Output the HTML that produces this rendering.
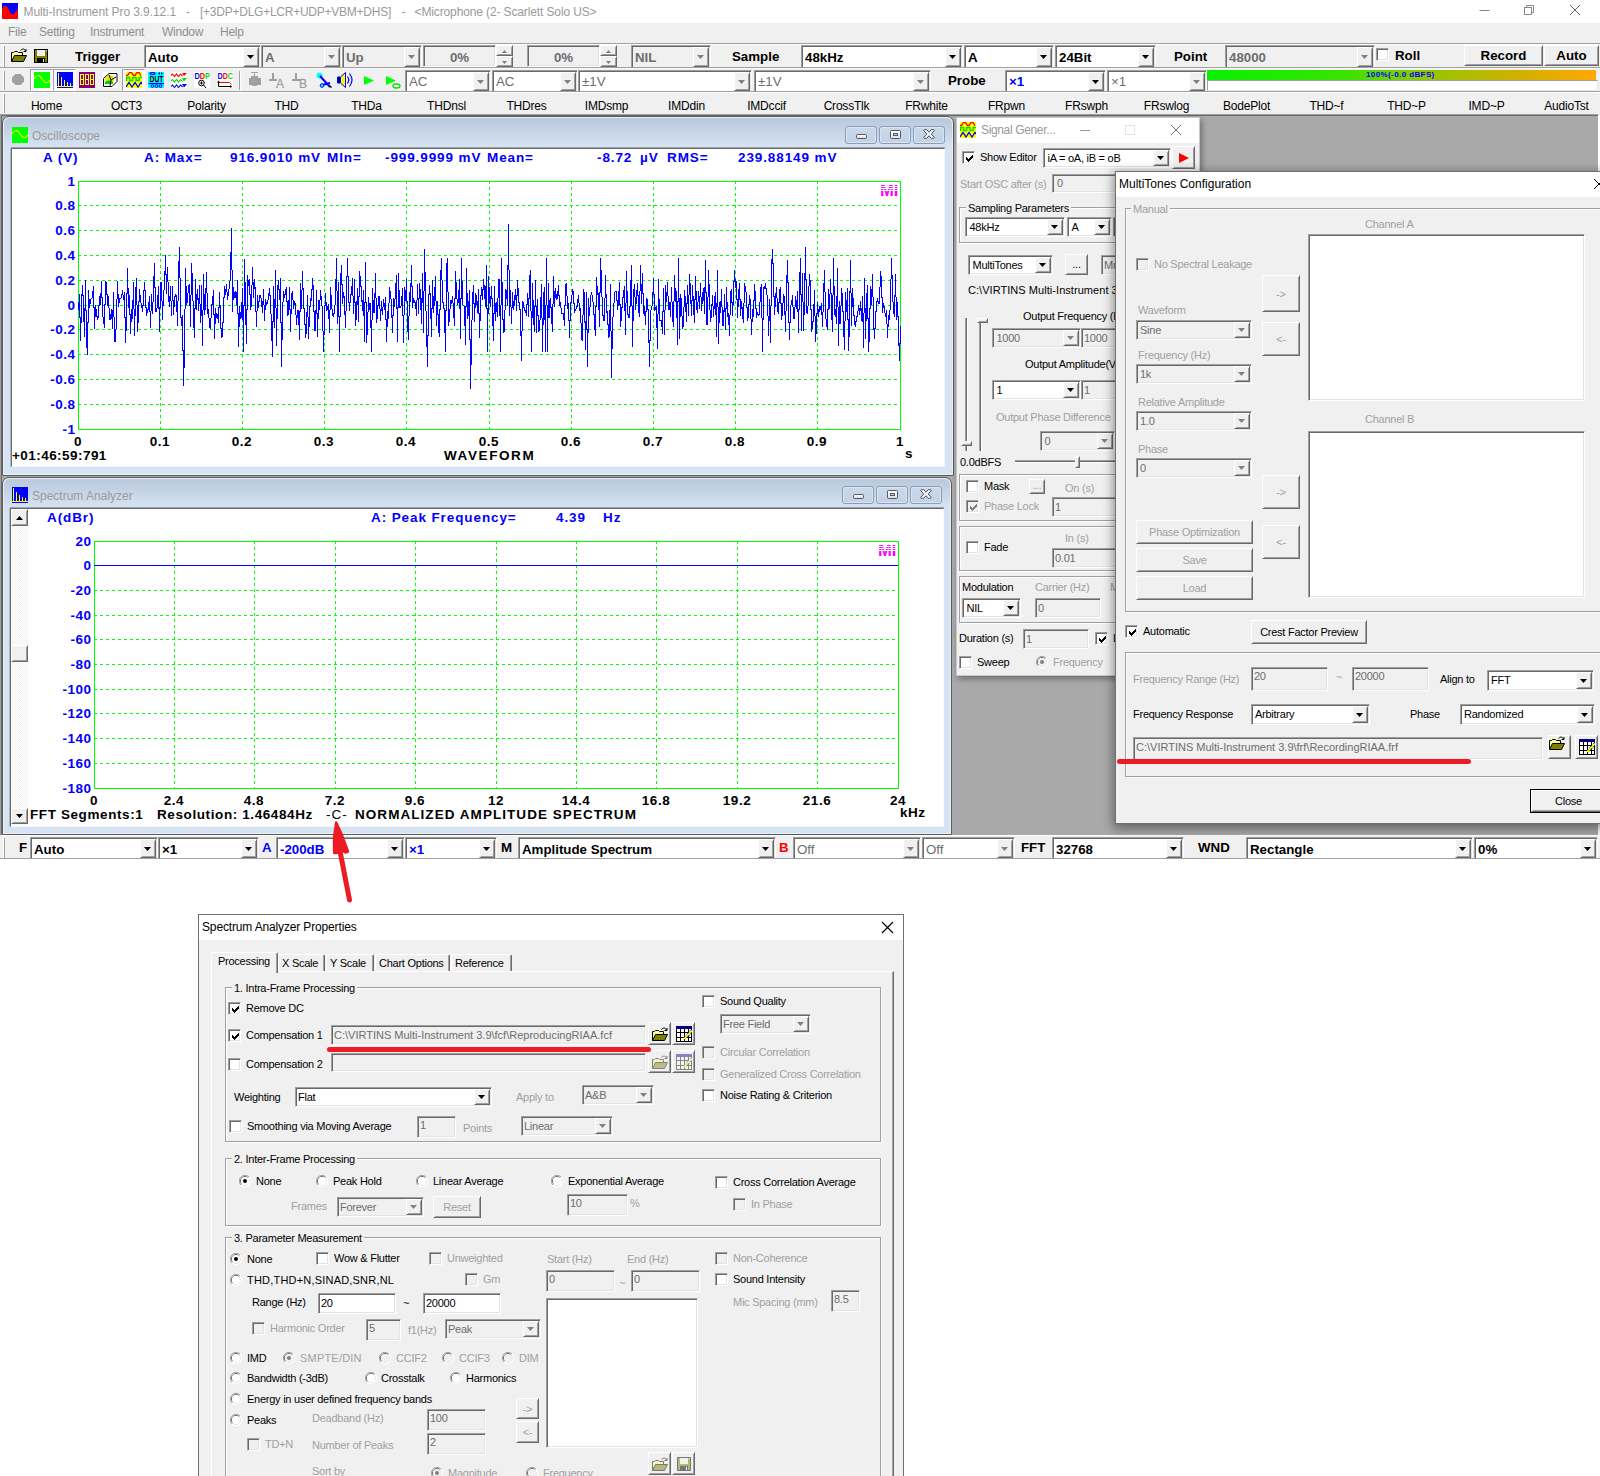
<!DOCTYPE html>
<html><head><meta charset="utf-8"><title>Multi-Instrument Pro</title>
<style>
*{box-sizing:border-box;margin:0;padding:0}
html,body{width:1600px;height:1476px;overflow:hidden;background:#fff}
body{font-family:"Liberation Sans",sans-serif;font-size:11px;color:#000;position:relative}
div,span,svg.abs,svg.rd{position:absolute}
span{white-space:pre;line-height:14px}
.t{font-size:11px;letter-spacing:-.25px}
.w{letter-spacing:.2px}
.tb{font-size:13.3px;font-weight:bold;line-height:16px}
.ui{font-size:12px;line-height:15px}
.sk{border:1px solid;border-color:#a0a0a0 #fff #fff #a0a0a0;box-shadow:inset 1px 1px 0 #696969,inset -1px -1px 0 #e3e3e3}
.rs{background:#f0f0f0;border:1px solid;border-color:#fff #696969 #696969 #fff;box-shadow:inset 1px 1px 0 #f0f0f0,inset -1px -1px 0 #a0a0a0}
.rs .ar{position:absolute;left:50%;top:50%;margin-left:-4px;margin-top:-2px}
.gb{border:1px solid #a0a0a0;box-shadow:1px 1px 0 #fff,inset 1px 1px 0 #fff}

.cw{border:1px solid #5a5a5a;border-radius:7px 7px 1px 1px;background:#d6e3f2;box-shadow:inset 0 0 0 1px #e9f0f8}
.cwt{left:1px;right:1px;top:1px;height:28px;border-radius:6px 6px 0 0;background:linear-gradient(#b9c9dc 0%,#c3d2e4 40%,#d6e3f2 100%)}
.cwb{width:32px;height:18px;border:1px solid #8b9cba;border-radius:3px;background:linear-gradient(#cbd9ea,#c2d1e4);box-shadow:inset 0 0 0 1px #dbe6f3}
.cwb i{position:absolute;background:linear-gradient(#fff,#e0e0e0);border:1px solid #55586a}
.cwb b{position:absolute;background:#c6d4e6;border:1px solid #55586a}
.cwc{background:#fff;border:1px solid;border-color:#6a6a6a #f4f7fb #f4f7fb #6a6a6a;box-shadow:0 -1px 0 #9aa3ad,-1px 0 0 #b0bac6}

.cb{font-size:13.5px;font-weight:bold;line-height:16px}
</style></head>
<body>
<div class="" style="left:0px;top:0px;width:1600px;height:23px;background:#fff"></div>
<svg class="abs" style="left:2px;top:3px" width="16" height="16" viewBox="0 0 16 16"><rect width="16" height="16" fill="#0000ff"/><path d="M0 6 C2 1.5 4.5 1.5 6.5 6 S10.5 13.5 13 9.5 L16 6 V16 H0z" fill="#ff0000"/></svg>
<span class="ui" style="left:23.5px;top:5px;letter-spacing:-0.077px;color:#999">Multi-Instrument Pro 3.9.12.1</span>
<span class="ui" style="left:186px;top:5px;color:#999">-</span>
<span class="ui" style="left:200px;top:5px;letter-spacing:-0.247px;color:#999">[+3DP+DLG+LCR+UDP+VBM+DHS]</span>
<span class="ui" style="left:401.5px;top:5px;color:#999">-</span>
<span class="ui" style="left:414.5px;top:5px;letter-spacing:-0.124px;color:#999">&lt;Microphone (2- Scarlett Solo US&gt;</span>
<svg class="abs" style="left:1470px;top:0" width="130" height="23" viewBox="0 0 130 23"><g stroke="#888" fill="none" stroke-width="1"><path d="M9.5 10.5h10"/><rect x="54.500" y="7.500" width="7" height="7"/><path d="M56.500 7.500v-2h7v7h-2"/><path d="M100 5l10 10M110 5l-10 10" stroke="#666"/></g></svg>
<div class="" style="left:0px;top:23px;width:1600px;height:21px;background:#f0f0f0"></div>
<span class="ui" style="left:8px;top:25px;color:#8f8f8f;letter-spacing:-.25px">File</span>
<span class="ui" style="left:39px;top:25px;color:#8f8f8f;letter-spacing:-.25px">Setting</span>
<span class="ui" style="left:90px;top:25px;color:#8f8f8f;letter-spacing:-.25px">Instrument</span>
<span class="ui" style="left:162px;top:25px;color:#8f8f8f;letter-spacing:-.25px">Window</span>
<span class="ui" style="left:220px;top:25px;color:#8f8f8f;letter-spacing:-.25px">Help</span>
<div class="" style="left:0px;top:43px;width:1600px;height:73px;background:#f0f0f0"></div>
<div class="" style="left:0px;top:43px;width:1600px;height:1px;background:#a0a0a0"></div>
<div class="" style="left:0px;top:44px;width:1600px;height:1px;background:#fff"></div>
<div class="" style="left:0px;top:67px;width:1600px;height:1px;background:#a0a0a0"></div>
<div class="" style="left:0px;top:68px;width:1600px;height:1px;background:#f8f8f8"></div>
<div class="" style="left:0px;top:91px;width:1600px;height:1px;background:#a0a0a0"></div>
<div class="" style="left:0px;top:92px;width:1600px;height:1px;background:#fff"></div>
<div class="" style="left:3px;top:46px;width:1px;height:21px;background:#fff"></div>
<div class="" style="left:4px;top:46px;width:1px;height:21px;background:#a0a0a0"></div>
<div class="" style="left:3px;top:71px;width:1px;height:19px;background:#fff"></div>
<div class="" style="left:4px;top:71px;width:1px;height:19px;background:#a0a0a0"></div>
<div class="" style="left:3px;top:94px;width:1px;height:19px;background:#fff"></div>
<div class="" style="left:4px;top:94px;width:1px;height:19px;background:#a0a0a0"></div>
<svg class="abs" style="left:11px;top:48px;opacity:1" width="16" height="15" viewBox="0 0 16 15"><path d="M0.500 13.500V4.500h2l1-1h3l1 1h4v3" fill="#ffff99" stroke="#000"/><path d="M0.500 13.500l3-6h12l-3 6z" fill="#808000" stroke="#000"/><path d="M9.500 2.500c2-2 4-2 5 0.500m0.500-2v2.500h-2.500" fill="none" stroke="#000"/></svg>
<svg class="abs" style="left:34px;top:49px;opacity:1" width="14" height="14" viewBox="0 0 14 14" shape-rendering="crispEdges"><rect x="0.500" y="0.500" width="13" height="13" fill="#808000" stroke="#000"/><rect x="3" y="1" width="8" height="6" fill="#f0f0f0"/><rect x="3" y="9" width="8" height="4" fill="#000"/><rect x="9" y="10" width="1" height="3" fill="#f0f0f0"/><rect x="12" y="1" width="1" height="1" fill="#f0f0f0"/></svg>
<span class="tb" style="left:75px;top:49px;">Trigger</span>
<div class="sk" style="left:144px;top:45px;width:117px;height:24px;background:#fff;"></div>
<div class="rs" style="left:243px;top:47px;width:16px;height:20px;"><svg class="ar" width="7" height="4" viewBox="0 0 7 4"><path d="M0 0h7L3.5 4z" fill="#000"/></svg></div>
<span class="tb" style="left:148px;top:50px;color:#000;">Auto</span>
<div class="sk" style="left:261px;top:45px;width:81px;height:24px;background:#f0f0f0;"></div>
<div class="rs" style="left:324px;top:47px;width:16px;height:20px;"><svg class="ar" width="7" height="4" viewBox="0 0 7 4"><path d="M0 0h7L3.5 4z" fill="#808080"/></svg></div>
<span class="tb" style="left:265px;top:50px;color:#6d6d6d;">A</span>
<div class="sk" style="left:342px;top:45px;width:80px;height:24px;background:#f0f0f0;"></div>
<div class="rs" style="left:404px;top:47px;width:16px;height:20px;"><svg class="ar" width="7" height="4" viewBox="0 0 7 4"><path d="M0 0h7L3.5 4z" fill="#808080"/></svg></div>
<span class="tb" style="left:346px;top:50px;color:#6d6d6d;">Up</span>
<div class="sk" style="left:423px;top:45px;width:73px;height:22px;background:#f0f0f0;"></div>
<span class="tb" style="left:423px;top:50px;width:73px;text-align:center;color:#6d6d6d">0%</span>
<div class="rs" style="left:496px;top:45px;width:17px;height:11px;"><svg class="ar" width="5" height="3" viewBox="0 0 5 3" style="margin-left:-3px;margin-top:-1px"><path d="M0 3h5L2.500 0z" fill="#808080"/></svg></div>
<div class="rs" style="left:496px;top:56px;width:17px;height:11px;"><svg class="ar" width="5" height="3" viewBox="0 0 5 3" style="margin-left:-3px;margin-top:-1px"><path d="M0 0h5L2.500 3z" fill="#808080"/></svg></div>
<div class="sk" style="left:527px;top:45px;width:73px;height:22px;background:#f0f0f0;"></div>
<span class="tb" style="left:527px;top:50px;width:73px;text-align:center;color:#6d6d6d">0%</span>
<div class="rs" style="left:600px;top:45px;width:17px;height:11px;"><svg class="ar" width="5" height="3" viewBox="0 0 5 3" style="margin-left:-3px;margin-top:-1px"><path d="M0 3h5L2.500 0z" fill="#808080"/></svg></div>
<div class="rs" style="left:600px;top:56px;width:17px;height:11px;"><svg class="ar" width="5" height="3" viewBox="0 0 5 3" style="margin-left:-3px;margin-top:-1px"><path d="M0 0h5L2.500 3z" fill="#808080"/></svg></div>
<div class="sk" style="left:631px;top:45px;width:80px;height:24px;background:#f0f0f0;"></div>
<div class="rs" style="left:693px;top:47px;width:16px;height:20px;"><svg class="ar" width="7" height="4" viewBox="0 0 7 4"><path d="M0 0h7L3.5 4z" fill="#808080"/></svg></div>
<span class="tb" style="left:635px;top:50px;color:#6d6d6d;">NIL</span>
<span class="tb" style="left:732px;top:49px;">Sample</span>
<div class="sk" style="left:801px;top:45px;width:162px;height:24px;background:#fff;"></div>
<div class="rs" style="left:945px;top:47px;width:16px;height:20px;"><svg class="ar" width="7" height="4" viewBox="0 0 7 4"><path d="M0 0h7L3.5 4z" fill="#000"/></svg></div>
<span class="tb" style="left:805px;top:50px;color:#000;">48kHz</span>
<div class="sk" style="left:964px;top:45px;width:90px;height:24px;background:#fff;"></div>
<div class="rs" style="left:1036px;top:47px;width:16px;height:20px;"><svg class="ar" width="7" height="4" viewBox="0 0 7 4"><path d="M0 0h7L3.5 4z" fill="#000"/></svg></div>
<span class="tb" style="left:968px;top:50px;color:#000;">A</span>
<div class="sk" style="left:1055px;top:45px;width:101px;height:24px;background:#fff;"></div>
<div class="rs" style="left:1138px;top:47px;width:16px;height:20px;"><svg class="ar" width="7" height="4" viewBox="0 0 7 4"><path d="M0 0h7L3.5 4z" fill="#000"/></svg></div>
<span class="tb" style="left:1059px;top:50px;color:#000;">24Bit</span>
<span class="tb" style="left:1174px;top:49px;">Point</span>
<div class="sk" style="left:1225px;top:45px;width:150px;height:24px;background:#f0f0f0;"></div>
<div class="rs" style="left:1357px;top:47px;width:16px;height:20px;"><svg class="ar" width="7" height="4" viewBox="0 0 7 4"><path d="M0 0h7L3.5 4z" fill="#808080"/></svg></div>
<span class="tb" style="left:1229px;top:50px;color:#6d6d6d;">48000</span>
<div class="sk" style="left:1376px;top:48px;width:13px;height:13px;background:#fff;"></div>
<span class="tb" style="left:1395px;top:48px;">Roll</span>
<div class="rs" style="left:1464px;top:45px;width:79px;height:21px;"><span class="tb" style="position:absolute;left:0;right:0;text-align:center;top:2px;color:#000;">Record</span></div>
<div class="rs" style="left:1544px;top:45px;width:55px;height:21px;"><span class="tb" style="position:absolute;left:0;right:0;text-align:center;top:2px;color:#000;">Auto</span></div>
<div class="sk" style="left:405px;top:70px;width:86px;height:23px;background:#fff;"></div>
<div class="rs" style="left:473px;top:72px;width:16px;height:19px;"><svg class="ar" width="7" height="4" viewBox="0 0 7 4"><path d="M0 0h7L3.5 4z" fill="#808080"/></svg></div>
<span class="tb" style="left:409px;top:74px;color:#6d6d6d;font-weight:normal">AC</span>
<div class="sk" style="left:492px;top:70px;width:86px;height:23px;background:#fff;"></div>
<div class="rs" style="left:560px;top:72px;width:16px;height:19px;"><svg class="ar" width="7" height="4" viewBox="0 0 7 4"><path d="M0 0h7L3.5 4z" fill="#808080"/></svg></div>
<span class="tb" style="left:496px;top:74px;color:#6d6d6d;font-weight:normal">AC</span>
<div class="sk" style="left:578px;top:70px;width:174px;height:23px;background:#fff;"></div>
<div class="rs" style="left:734px;top:72px;width:16px;height:19px;"><svg class="ar" width="7" height="4" viewBox="0 0 7 4"><path d="M0 0h7L3.5 4z" fill="#808080"/></svg></div>
<span class="tb" style="left:582px;top:74px;color:#6d6d6d;font-weight:normal">±1V</span>
<div class="sk" style="left:754px;top:70px;width:177px;height:23px;background:#fff;"></div>
<div class="rs" style="left:913px;top:72px;width:16px;height:19px;"><svg class="ar" width="7" height="4" viewBox="0 0 7 4"><path d="M0 0h7L3.5 4z" fill="#808080"/></svg></div>
<span class="tb" style="left:758px;top:74px;color:#6d6d6d;font-weight:normal">±1V</span>
<span class="tb" style="left:948px;top:73px;">Probe</span>
<div class="sk" style="left:1005px;top:70px;width:101px;height:23px;background:#fff;"></div>
<div class="rs" style="left:1088px;top:72px;width:16px;height:19px;"><svg class="ar" width="7" height="4" viewBox="0 0 7 4"><path d="M0 0h7L3.5 4z" fill="#000"/></svg></div>
<span class="tb" style="left:1009px;top:74px;color:#0000ff;">×1</span>
<div class="sk" style="left:1107px;top:70px;width:100px;height:23px;background:#fff;"></div>
<div class="rs" style="left:1189px;top:72px;width:16px;height:19px;"><svg class="ar" width="7" height="4" viewBox="0 0 7 4"><path d="M0 0h7L3.5 4z" fill="#808080"/></svg></div>
<span class="tb" style="left:1111px;top:74px;color:#6d6d6d;font-weight:normal">×1</span>
<div class="" style="left:1207px;top:70px;width:389px;height:10px;background:linear-gradient(90deg,#08f000 0%,#38e400 35%,#90c800 55%,#d0b000 80%,#ffa800 100%)"></div>
<span class="t" style="left:1366px;top:68px;font-size:8px;font-weight:bold;color:#0000ff;letter-spacing:.4px">100%(-0.0 dBFS)</span>
<div class="" style="left:1207px;top:80px;width:391px;height:11px;background:#fff;border:1px solid;border-color:#a0a0a0 #e8e8e8 #e8e8e8 #a0a0a0"></div>
<span class="ui" style="left:6.5px;top:99px;width:80px;text-align:center;letter-spacing:-.2px">Home</span>
<span class="ui" style="left:86.5px;top:99px;width:80px;text-align:center;letter-spacing:-.2px">OCT3</span>
<span class="ui" style="left:166.5px;top:99px;width:80px;text-align:center;letter-spacing:-.2px">Polarity</span>
<span class="ui" style="left:246.5px;top:99px;width:80px;text-align:center;letter-spacing:-.2px">THD</span>
<span class="ui" style="left:326.5px;top:99px;width:80px;text-align:center;letter-spacing:-.2px">THDa</span>
<span class="ui" style="left:406.5px;top:99px;width:80px;text-align:center;letter-spacing:-.2px">THDnsl</span>
<span class="ui" style="left:486.5px;top:99px;width:80px;text-align:center;letter-spacing:-.2px">THDres</span>
<span class="ui" style="left:566.5px;top:99px;width:80px;text-align:center;letter-spacing:-.2px">IMDsmp</span>
<span class="ui" style="left:646.5px;top:99px;width:80px;text-align:center;letter-spacing:-.2px">IMDdin</span>
<span class="ui" style="left:726.5px;top:99px;width:80px;text-align:center;letter-spacing:-.2px">IMDccif</span>
<span class="ui" style="left:806.5px;top:99px;width:80px;text-align:center;letter-spacing:-.2px">CrossTlk</span>
<span class="ui" style="left:886.5px;top:99px;width:80px;text-align:center;letter-spacing:-.2px">FRwhite</span>
<span class="ui" style="left:966.5px;top:99px;width:80px;text-align:center;letter-spacing:-.2px">FRpwn</span>
<span class="ui" style="left:1046.5px;top:99px;width:80px;text-align:center;letter-spacing:-.2px">FRswph</span>
<span class="ui" style="left:1126.5px;top:99px;width:80px;text-align:center;letter-spacing:-.2px">FRswlog</span>
<span class="ui" style="left:1206.5px;top:99px;width:80px;text-align:center;letter-spacing:-.2px">BodePlot</span>
<span class="ui" style="left:1286.5px;top:99px;width:80px;text-align:center;letter-spacing:-.2px">THD~f</span>
<span class="ui" style="left:1366.5px;top:99px;width:80px;text-align:center;letter-spacing:-.2px">THD~P</span>
<span class="ui" style="left:1446.5px;top:99px;width:80px;text-align:center;letter-spacing:-.2px">IMD~P</span>
<span class="ui" style="left:1526.5px;top:99px;width:80px;text-align:center;letter-spacing:-.2px">AudioTst</span>
<div class="" style="left:30px;top:69px;width:23px;height:22px;background:#f8f8f8;border:1px solid;border-color:#a0a0a0 #fff #fff #a0a0a0"></div>
<div class="" style="left:53px;top:69px;width:23px;height:22px;background:#f8f8f8;border:1px solid;border-color:#a0a0a0 #fff #fff #a0a0a0"></div>
<div class="" style="left:122px;top:69px;width:23px;height:22px;background:#f8f8f8;border:1px solid;border-color:#a0a0a0 #fff #fff #a0a0a0"></div>
<svg class="abs" style="left:12px;top:74px" width="12" height="11" viewBox="0 0 12 11"><path d="M3.500 0h5l3.500 3.500v4L8.500 11h-5L0 7.500v-4z" fill="#a0a0a0"/></svg>
<svg class="abs" style="left:34px;top:72px" width="16" height="16" viewBox="0 0 16 16" shape-rendering="crispEdges"><rect width="16" height="16" fill="#00ff00"/><path d="M0 7 Q4 0 8 7 T16 8" fill="none" stroke="#ffff00" stroke-width="1.200" shape-rendering="auto"/></svg>
<svg class="abs" style="left:57px;top:72px" width="16" height="16" viewBox="0 0 16 16" shape-rendering="crispEdges"><rect width="16" height="16" fill="#0000ff"/><path d="M1.500 1v13M4.500 5v9M7.500 8v6M10.500 10v4M13.500 11v3M0 14.500h16" stroke="#ffff00" fill="none"/></svg>
<svg class="abs" style="left:79px;top:72px" width="16" height="16" viewBox="0 0 16 16" shape-rendering="crispEdges"><rect width="16" height="16" fill="#800080"/><g stroke="#ffff00" fill="none"><rect x="1.500" y="2.500" width="3" height="5"/><rect x="1.500" y="7.500" width="3" height="5"/><rect x="6.500" y="2.500" width="3" height="5"/><rect x="6.500" y="7.500" width="3" height="5"/><rect x="11.500" y="2.500" width="3" height="5"/><rect x="11.500" y="7.500" width="3" height="5"/></g></svg>
<svg class="abs" style="left:102px;top:72px" width="16" height="16" viewBox="0 0 16 16" shape-rendering="crispEdges"><rect width="16" height="16" fill="#fff"/><path d="M1.500 6.500L7 1.500h8v8L10 14.500H1.500z" fill="#fff" stroke="#000" shape-rendering="auto"/><path d="M3 7c2-4 5-5 8-3 2 2 1 5-1 6H4z" fill="#e8e800" shape-rendering="auto"/><path d="M3 10c2-2 6-2 8 0v2H3z" fill="#00d000" shape-rendering="auto"/><path d="M7 3l2 5 5-3M9 8l-1 6" stroke="#000" fill="none" shape-rendering="auto"/></svg>
<svg class="abs" style="left:126px;top:72px" width="16" height="16" viewBox="0 0 16 16" shape-rendering="crispEdges"><rect width="16" height="16" fill="#ffff00"/><g fill="none" shape-rendering="auto" stroke-width="1.300"><path d="M0 3.500h1q1 0 1.500-1.500t1.500-1.500h1q1 0 1.500 1.500t1.500 1.500h0.500q1 0 1.500-1.500t1.500-1.500h1q1 0 1.500 1.500t1 1.500" stroke="#ff0000"/><path d="M0.600 9V5.600h3v3h3v-3h3.500v3h3v-3h3" stroke="#00e000" stroke-width="1.500"/><path d="M0 15l3-4.500 3 4.500 3-4.500 3 4.500 3-4.500 1 1.500" stroke="#0000ff"/></g></svg>
<svg class="abs" style="left:148px;top:72px" width="16" height="16" viewBox="0 0 16 16"><rect width="16" height="16" fill="#00ffff"/><g fill="none" stroke="#0000ff"><ellipse cx="4.500" cy="1.500" rx="2.500" ry="1" stroke-width="1.200"/><path d="M0.500 11.500h15.500" stroke-width="1.200"/><circle cx="4.500" cy="14" r="1.400"/><circle cx="8.500" cy="14" r="1.400"/><circle cx="12.500" cy="14" r="1.400"/></g><path d="M12 0v3l-2-1.500zM13 0v3l2-1.500z" fill="#0000ff"/><text x="8.500" y="10" font-family="Liberation Sans" font-weight="bold" font-size="9.500" text-anchor="middle" fill="#000" textLength="14" lengthAdjust="spacingAndGlyphs">DUT</text></svg>
<svg class="abs" style="left:171px;top:72px" width="16" height="16" viewBox="0 0 16 16"><rect width="16" height="16" fill="#fff"/><g fill="none" stroke-width="1.100"><path d="M0 3.500l1.500-1.500 2 2.500 2-2.500 2 2.500 2-2.500 2 2" stroke="#ff0000"/><path d="M0 9l1.500-1.500 2 2.500 2-2.500 2 2.500 2-2.500 2 2" stroke="#00e000"/><path d="M0 14.500l1.500-1.500 2 2.500 2-2.500 2 2.500 2-2.500 2 2" stroke="#0000ff"/></g><path d="M11 1h5l-3 3z" fill="#ff0000"/><path d="M11 6h5l-3 3.500z" fill="#00e000"/><path d="M11 12h5l-3 3.500z" fill="#0000ff"/></svg>
<svg class="abs" style="left:194px;top:72px" width="16" height="16" viewBox="0 0 16 16"><rect width="16" height="16" fill="#fff"/><text x="0.500" y="7" font-family="Liberation Sans" font-weight="bold" font-size="8.500" textLength="15.500" lengthAdjust="spacingAndGlyphs"><tspan fill="#0000ff">D</tspan><tspan fill="#ff0000">D</tspan><tspan fill="#00e000">P</tspan></text><circle cx="7.500" cy="11" r="2.800" fill="none" stroke="#000"/><path d="M9.500 13l2.500 3M6 11h3M7.500 9.500v3" stroke="#000" fill="none"/></svg>
<svg class="abs" style="left:217px;top:72px" width="16" height="16" viewBox="0 0 16 16"><rect width="16" height="16" fill="#fff"/><text x="0.500" y="7" font-family="Liberation Sans" font-weight="bold" font-size="8.500" textLength="15.500" lengthAdjust="spacingAndGlyphs"><tspan fill="#0000ff">D</tspan><tspan fill="#ff0000">D</tspan><tspan fill="#00e000">C</tspan></text><path d="M1.500 9v5.500h13" stroke="#000" fill="none"/><path d="M1.500 10.500h11l2 2" stroke="#ff0000" fill="none"/><path d="M0 10.500l1.500-2 1.500 2zM13 13l2 1.500-2 1.500z" fill="#000"/></svg>
<div class="" style="left:239px;top:71px;width:1px;height:19px;background:#a0a0a0"></div>
<div class="" style="left:240px;top:71px;width:1px;height:19px;background:#fff"></div>
<svg class="abs" style="left:248px;top:72px" width="13" height="16" viewBox="0 0 13 16" shape-rendering="crispEdges"><path d="M3 0.500h7M6.500 0v4M4 4h5l1 2h2v6h-2l-1 1H4l-1-1H1V6h2z" fill="#a0a0a0" stroke="#a0a0a0"/><path d="M2 14.500h3M8 14.500h3" stroke="#fff"/></svg>
<svg class="abs" style="left:269px;top:72px" width="16" height="16" viewBox="0 0 16 16"><path d="M0 8h8M4 1v7" stroke="#a0a0a0" stroke-width="2" fill="none"/><text x="7" y="15.500" font-family="Liberation Sans" font-size="12" fill="#a0a0a0" stroke="#a0a0a0" stroke-width=".300">A</text></svg>
<svg class="abs" style="left:292px;top:72px" width="16" height="16" viewBox="0 0 16 16"><path d="M0 8h8M4 1v7" stroke="#a0a0a0" stroke-width="2" fill="none"/><text x="7" y="15.500" font-family="Liberation Sans" font-size="12" fill="#a0a0a0" stroke="#a0a0a0" stroke-width=".300">B</text></svg>
<svg class="abs" style="left:316px;top:72px" width="16" height="16" viewBox="0 0 16 16"><circle cx="3.500" cy="3.500" r="3" fill="#00ffff"/><path d="M4 4l10 11M14 11L6 13" stroke="#0000ff" stroke-width="2" fill="none"/><circle cx="6" cy="13.500" r="1.800" fill="#00ffff" stroke="#0000ff"/><path d="M14 14l1.500 1.500" stroke="#000" stroke-width="1.500"/></svg>
<svg class="abs" style="left:337px;top:72px" width="17" height="16" viewBox="0 0 17 16"><path d="M0.500 5h3v6h-3z" fill="#000080" stroke="#0000ff"/><path d="M3.500 5l5-4.500v15l-5-4.500z" fill="#ffff00" stroke="#0000ff"/><path d="M10.500 4.500q2.500 3.500 0 7M12.500 1.500q5 6.500 0 13" stroke="#0000ff" fill="none" stroke-width="1.200"/></svg>
<svg class="abs" style="left:364px;top:74px" width="11" height="13" viewBox="0 0 11 13"><path d="M0 2l10 4.500L0 11z" fill="#00ff00"/></svg>
<svg class="abs" style="left:386px;top:74px" width="15" height="15" viewBox="0 0 15 15"><path d="M0 2l10 4.500L0 11z" fill="#00ff00"/><ellipse cx="10.500" cy="12" rx="3.500" ry="2" fill="none" stroke="#00e000" stroke-width="1.300"/></svg>
<div class="" style="left:0px;top:114px;width:1599px;height:722px;background:#a9a9a9;border:1px solid #fff;border-top:1px solid #a0a0a0;border-left:1px solid #a0a0a0;box-shadow:inset 1px 1px 0 #696969"></div>
<div class="cw" style="left:2px;top:116px;width:952px;height:360px"><div class="cwt" style="height:29px"></div><div style="left:1px;top:1px;right:-1px;height:30px"><div style="left:0px;top:0;width:300px;height:30px"><svg style="position:absolute;left:8px;top:9px" width="16" height="16" viewBox="0 0 16 16"><rect width="16" height="16" fill="#00ff00"/><path d="M0 7 Q4 0 8 7 T16 8" fill="none" stroke="#ffff00" stroke-width="1.2"/></svg><span class="ui" style="left:28px;top:11px;color:#9a9a9a">Oscilloscope</span></div><div class="cwb" style="right:77px;top:8px"><i style="left:10px;top:7px;width:11px;height:5px;border-radius:1.500px"></i></div><div class="cwb" style="right:43px;top:8px"><i style="left:10px;top:3px;width:11px;height:9px;border-radius:1.500px"></i><b style="left:13px;top:6px;width:5px;height:3px"></b></div><div class="cwb" style="right:9px;top:8px"><svg width="12" height="10" viewBox="0 0 12 10" style="position:absolute;left:9px;top:2px"><path d="M1.200 0.700h2.600L6 3.200 8.200 0.700h2.600q0.800 0.300 0.400 1.100L8.300 5l2.900 3.200q0.400 0.800-0.400 1.100H8.200L6 6.800 3.800 9.300H1.200q-0.800-0.300-0.400-1.100L3.700 5 0.800 1.800q-0.400-0.800 0.400-1.100z" fill="#f0f0f0" stroke="#55586a" stroke-width="1" stroke-linejoin="round"/></svg></div></div><div class="cwc" style="left:8px;top:31px;width:934px;height:319px"></div></div>
<span class="cb" style="left:43px;top:150px;color:#0000ff;letter-spacing:.9px">A (V)</span>
<span class="cb" style="left:144px;top:150px;color:#0000ff;letter-spacing:.9px">A: Max=</span>
<span class="cb" style="left:230px;top:150px;color:#0000ff;letter-spacing:.9px">916.9010 mV</span>
<span class="cb" style="left:327px;top:150px;color:#0000ff;letter-spacing:.9px">MIn=</span>
<span class="cb" style="left:385px;top:150px;color:#0000ff;letter-spacing:.9px">-999.9999 mV</span>
<span class="cb" style="left:487px;top:150px;color:#0000ff;letter-spacing:.9px">Mean=</span>
<span class="cb" style="left:597px;top:150px;color:#0000ff;letter-spacing:.9px">-8.72</span>
<span class="cb" style="left:640px;top:150px;color:#0000ff;letter-spacing:.9px">µV</span>
<span class="cb" style="left:667px;top:150px;color:#0000ff;letter-spacing:.9px">RMS=</span>
<span class="cb" style="left:738px;top:150px;color:#0000ff;letter-spacing:.9px">239.88149 mV</span>
<svg class="abs" style="left:0;top:0" width="960" height="480" viewBox="0 0 960 480" shape-rendering="crispEdges"><path d="M160.5 181V429M242.5 181V429M324.5 181V429M406.5 181V429M489.5 181V429M571.5 181V429M653.5 181V429M735.5 181V429M817.5 181V429M78 205.5H900M78 230.5H900M78 255.5H900M78 280.5H900M78 305.5H900M78 329.5H900M78 354.5H900M78 379.5H900M78 404.5H900" stroke="#00ff00" stroke-dasharray="3 3" fill="none"/><rect x="78.5" y="181.5" width="822" height="248" fill="none" stroke="#00ff00"/><path d="M78.5 302V310M79.5 294V318M80.5 317V341M81.5 294V323M82.5 285V296M83.5 295V322M84.5 308V337M85.5 280V311M86.5 310V348M87.5 322V355M88.5 290V323M89.5 299V308M90.5 299V304M91.5 298V299M92.5 291V298M93.5 286V308M94.5 307V329M95.5 305V317M96.5 309V317M97.5 316V320M98.5 305V318M99.5 296V306M100.5 293V305M101.5 281V298M102.5 297V317M103.5 317V324M104.5 304V328M105.5 281V305M106.5 282V295M107.5 294V306M108.5 296V308M109.5 308V320M110.5 314V320M111.5 309V319M112.5 310V329M113.5 292V317M114.5 317V342M115.5 329V342M116.5 299V329M117.5 281V299M118.5 294V307M119.5 298V303M120.5 298V299M121.5 294V298M122.5 290V295M123.5 295V300M124.5 292V318M125.5 317V343M126.5 293V331M127.5 268V294M128.5 288V308M129.5 295V315M130.5 314V334M131.5 309V322M132.5 300V319M133.5 282V309M134.5 309V336M135.5 287V316M136.5 278V305M137.5 305V332M138.5 301V323M139.5 289V302M140.5 295V303M141.5 303V308M142.5 305V312M143.5 290V306M144.5 282V291M145.5 290V308M146.5 307V316M147.5 309V313M148.5 302V310M149.5 296V312M150.5 311V328M151.5 294V311M152.5 302V314M153.5 276V302M154.5 263V288M155.5 287V312M156.5 308V312M157.5 295V308M158.5 286V309M159.5 307V332M160.5 282V308M161.5 282V301M162.5 301V320M163.5 290V306M164.5 271V290M165.5 255V275M166.5 274V294M167.5 267V282M168.5 282V302M169.5 296V307M170.5 286V301M171.5 301V316M172.5 286V301M173.5 300V315M174.5 296V307M175.5 294V297M176.5 295V312M177.5 301V326M178.5 261V301M179.5 247V278M180.5 278V318M181.5 317V326M182.5 315V351M183.5 350V386M184.5 309V368M185.5 268V309M186.5 286V305M187.5 293V303M188.5 285V293M189.5 284V306M190.5 295V327M191.5 263V295M192.5 273V301M193.5 301V328M194.5 308V338M195.5 279V309M196.5 294V310M197.5 289V300M198.5 298V311M199.5 285V304M200.5 304V323M201.5 285V316M202.5 310V346M203.5 274V310M204.5 294V315M205.5 288V310M206.5 272V293M207.5 293V314M208.5 309V318M209.5 318V328M210.5 318V329M211.5 304V318M212.5 296V305M213.5 290V315M214.5 314V339M215.5 308V324M216.5 313V318M217.5 314V319M218.5 307V323M219.5 292V308M220.5 305V329M221.5 328V338M222.5 322V337M223.5 297V323M224.5 286V298M225.5 289V295M226.5 284V292M227.5 292V300M228.5 289V296M229.5 281V289M230.5 252V281M231.5 228V270M232.5 270V312M233.5 287V300M234.5 292V298M235.5 291V298M236.5 292V305M237.5 280V314M238.5 313V347M239.5 306V327M240.5 312V319M241.5 302V318M242.5 288V320M243.5 305V352M244.5 259V306M245.5 282V325M246.5 309V344M247.5 275V310M248.5 280V286M249.5 279V295M250.5 294V310M251.5 285V307M252.5 267V285M253.5 282V298M254.5 279V289M255.5 287V312M256.5 311V327M257.5 295V311M258.5 301V308M259.5 295V302M260.5 295V298M261.5 298V307M262.5 301V313M263.5 289V305M264.5 305V321M265.5 299V310M266.5 302V305M267.5 300V304M268.5 293V300M269.5 288V296M270.5 295V314M271.5 314V341M272.5 321V357M273.5 286V322M274.5 299V328M275.5 270V308M276.5 308V346M277.5 285V319M278.5 280V290M279.5 289V300M280.5 278V323M281.5 322V367M282.5 302V340M283.5 291V302M284.5 294V298M285.5 289V295M286.5 287V302M287.5 301V316M288.5 300V315M289.5 287V310M290.5 309V332M291.5 293V314M292.5 291V300M293.5 300V309M294.5 301V305M295.5 303V315M296.5 315V325M297.5 310V318M298.5 310V325M299.5 311V340M300.5 283V312M301.5 290V309M302.5 271V290M303.5 288V309M304.5 308V325M305.5 324V338M306.5 312V334M307.5 295V317M308.5 317V339M309.5 306V327M310.5 298V307M311.5 289V301M312.5 278V290M313.5 285V312M314.5 311V331M315.5 310V331M316.5 290V314M317.5 313V337M318.5 300V319M319.5 300V310M320.5 290V300M321.5 296V306M322.5 306V331M323.5 331V352M324.5 305V335M325.5 293V306M326.5 302V311M327.5 306V310M328.5 304V319M329.5 310V333M330.5 287V310M331.5 295V309M332.5 309V316M333.5 313V317M334.5 305V314M335.5 279V305M336.5 258V291M337.5 291V324M338.5 282V317M339.5 316V352M340.5 273V317M341.5 265V285M342.5 284V304M343.5 292V298M344.5 296V315M345.5 311V328M346.5 276V311M347.5 258V277M348.5 276V303M349.5 302V311M350.5 294V303M351.5 286V295M352.5 278V296M353.5 296V314M354.5 279V303M355.5 302V326M356.5 301V320M357.5 288V305M358.5 296V322M359.5 271V297M360.5 276V287M361.5 286V302M362.5 300V311M363.5 290V316M364.5 302V342M365.5 262V303M366.5 302V343M367.5 312V335M368.5 297V312M369.5 303V310M370.5 303V328M371.5 320V352M372.5 288V320M373.5 300V313M374.5 293V313M375.5 273V298M376.5 298V323M377.5 305V319M378.5 296V306M379.5 296V309M380.5 309V321M381.5 301V311M382.5 307V315M383.5 299V307M384.5 303V310M385.5 297V320M386.5 319V342M387.5 311V327M388.5 303V319M389.5 287V303M390.5 291V299M391.5 299V318M392.5 315V333M393.5 298V316M394.5 299V307M395.5 283V299M396.5 275V309M397.5 307V342M398.5 273V308M399.5 290V308M400.5 306V308M401.5 296V306M402.5 288V316M403.5 315V343M404.5 287V315M405.5 290V301M406.5 279V302M407.5 301V332M408.5 316V340M409.5 292V316M410.5 283V302M411.5 265V287M412.5 286V308M413.5 298V303M414.5 300V303M415.5 302V309M416.5 300V316M417.5 284V300M418.5 298V314M419.5 283V299M420.5 289V310M421.5 298V324M422.5 273V303M423.5 291V333M424.5 249V291M425.5 272V311M426.5 311V347M427.5 335V367M428.5 294V336M429.5 285V295M430.5 293V319M431.5 308V337M432.5 280V309M433.5 296V313M434.5 287V306M435.5 276V301M436.5 301V326M437.5 301V315M438.5 314V333M439.5 309V337M440.5 270V310M441.5 258V280M442.5 280V303M443.5 302V309M444.5 308V333M445.5 310V352M446.5 263V311M447.5 258V292M448.5 292V326M449.5 309V322M450.5 300V309M451.5 300V304M452.5 296V303M453.5 303V318M454.5 298V326M455.5 271V299M456.5 282V299M457.5 299V305M458.5 290V303M459.5 279V309M460.5 298V339M461.5 258V299M462.5 281V305M463.5 305V306M464.5 306V326M465.5 306V345M466.5 268V307M467.5 293V319M468.5 301V316M469.5 290V340M470.5 339V389M471.5 320V365M472.5 292V320M473.5 285V304M474.5 303V322M475.5 293V308M476.5 295V305M477.5 301V313M478.5 289V314M479.5 313V338M480.5 295V321M481.5 287V296M482.5 289V300M483.5 279V290M484.5 285V299M485.5 286V307M486.5 265V309M487.5 308V352M488.5 276V314M489.5 287V303M490.5 296V307M491.5 286V299M492.5 298V326M493.5 313V341M494.5 286V314M495.5 303V321M496.5 302V312M497.5 298V317M498.5 279V298M499.5 279V316M500.5 305V352M501.5 258V305M502.5 282V320M503.5 319V333M504.5 310V332M505.5 289V310M506.5 290V299M507.5 265V306M508.5 224V270M509.5 270V316M510.5 290V307M511.5 307V324M512.5 292V308M513.5 301V310M514.5 295V306M515.5 289V300M516.5 295V311M517.5 280V296M518.5 288V303M519.5 302V310M520.5 309V336M521.5 331V361M522.5 301V331M523.5 302V308M524.5 307V311M525.5 310V313M526.5 304V316M527.5 293V305M528.5 298V317M529.5 275V299M530.5 270V311M531.5 311V352M532.5 283V318M533.5 300V325M534.5 306V332M535.5 280V307M536.5 306V333M537.5 299V316M538.5 315V332M539.5 320V331M540.5 297V320M541.5 284V318M542.5 318V352M543.5 292V325M544.5 287V320M545.5 305V352M546.5 258V305M547.5 305V352M548.5 283V318M549.5 300V318M550.5 298V308M551.5 307V324M552.5 304V332M553.5 276V304M554.5 291V307M555.5 288V298M556.5 294V300M557.5 291V299M558.5 285V296M559.5 295V306M560.5 302V308M561.5 308V314M562.5 313V314M563.5 313V320M564.5 305V326M565.5 284V306M566.5 283V296M567.5 296V309M568.5 303V321M569.5 320V338M570.5 302V321M571.5 295V303M572.5 289V295M573.5 291V304M574.5 303V313M575.5 309V311M576.5 306V309M577.5 299V307M578.5 295V303M579.5 303V311M580.5 308V323M581.5 323V340M582.5 315V341M583.5 289V315M584.5 292V323M585.5 321V350M586.5 292V330M587.5 329V367M588.5 298V333M589.5 307V316M590.5 295V307M591.5 292V295M592.5 295V302M593.5 302V315M594.5 314V330M595.5 306V336M596.5 277V307M597.5 286V295M598.5 293V310M599.5 292V327M600.5 258V293M601.5 270V297M602.5 297V316M603.5 315V321M604.5 298V321M605.5 275V298M606.5 294V313M607.5 311V325M608.5 324V338M609.5 310V337M610.5 284V331M611.5 331V378M612.5 317V349M613.5 303V317M614.5 292V303M615.5 291V292M616.5 291V301M617.5 300V310M618.5 291V306M619.5 282V305M620.5 304V327M621.5 307V321M622.5 297V308M623.5 290V298M624.5 286V311M625.5 303V335M626.5 271V303M627.5 291V315M628.5 314V318M629.5 306V318M630.5 280V307M631.5 265V306M632.5 306V347M633.5 289V321M634.5 284V297M635.5 297V310M636.5 290V304M637.5 283V296M638.5 295V313M639.5 291V317M640.5 265V291M641.5 284V304M642.5 273V294M643.5 293V314M644.5 306V316M645.5 311V325M646.5 298V312M647.5 299V310M648.5 309V343M649.5 340V367M650.5 310V341M651.5 306V310M652.5 292V306M653.5 278V295M654.5 294V311M655.5 307V310M656.5 306V328M657.5 314V349M658.5 279V314M659.5 299V321M660.5 320V321M661.5 320V327M662.5 311V334M663.5 288V312M664.5 310V335M665.5 285V310M666.5 292V302M667.5 282V296M668.5 296V310M669.5 302V310M670.5 302V317M671.5 287V302M672.5 302V322M673.5 301V327M674.5 275V301M675.5 288V302M676.5 291V318M677.5 301V345M678.5 258V302M679.5 298V339M680.5 294V317M681.5 298V316M682.5 316V329M683.5 307V327M684.5 290V307M685.5 296V312M686.5 303V322M687.5 285V304M688.5 295V316M689.5 274V295M690.5 283V304M691.5 300V316M692.5 285V301M693.5 296V315M694.5 299V323M695.5 276V300M696.5 291V310M697.5 302V313M698.5 291V302M699.5 296V309M700.5 283V297M701.5 297V311M702.5 292V304M703.5 288V301M704.5 287V314M705.5 260V293M706.5 292V325M707.5 297V325M708.5 270V297M709.5 284V310M710.5 310V322M711.5 304V318M712.5 295V306M713.5 306V317M714.5 296V309M715.5 292V315M716.5 303V337M717.5 270V307M718.5 307V344M719.5 302V323M720.5 301V313M721.5 289V307M722.5 307V326M723.5 310V326M724.5 294V312M725.5 308V330M726.5 287V309M727.5 302V317M728.5 313V325M729.5 315V336M730.5 291V315M731.5 289V303M732.5 302V316M733.5 281V305M734.5 270V282M735.5 279V288M736.5 281V300M737.5 299V318M738.5 289V307M739.5 283V300M740.5 299V316M741.5 301V309M742.5 307V319M743.5 303V323M744.5 283V303M745.5 286V292M746.5 292V308M747.5 307V321M748.5 304V318M749.5 295V305M750.5 299V319M751.5 319V335M752.5 309V322M753.5 300V317M754.5 284V301M755.5 291V309M756.5 308V318M757.5 312V315M758.5 314V316M759.5 302V315M760.5 287V302M761.5 284V318M762.5 318V352M763.5 287V320M764.5 286V289M765.5 283V289M766.5 288V295M767.5 295V316M768.5 316V336M769.5 299V321M770.5 306V343M771.5 259V306M772.5 249V264M773.5 263V297M774.5 296V315M775.5 293V307M776.5 287V298M777.5 298V312M778.5 302V314M779.5 289V303M780.5 287V304M781.5 303V320M782.5 303V316M783.5 294V303M784.5 296V315M785.5 311V332M786.5 275V311M787.5 260V283M788.5 282V323M789.5 322V340M790.5 305V323M791.5 300V305M792.5 295V307M793.5 307V319M794.5 307V319M795.5 296V307M796.5 300V309M797.5 291V312M798.5 309V333M799.5 272V310M800.5 258V295M801.5 294V331M802.5 273V302M803.5 302V331M804.5 273V315M805.5 247V280M806.5 279V313M807.5 306V314M808.5 286V306M809.5 274V286M810.5 280V310M811.5 309V332M812.5 321V329M813.5 304V322M814.5 290V316M815.5 316V342M816.5 313V334M817.5 302V314M818.5 309V317M819.5 306V312M820.5 306V310M821.5 303V315M822.5 312V327M823.5 283V312M824.5 270V292M825.5 292V319M826.5 319V327M827.5 309V330M828.5 289V310M829.5 294V309M830.5 279V294M831.5 293V320M832.5 295V332M833.5 258V295M834.5 286V315M835.5 309V317M836.5 296V324M837.5 268V307M838.5 307V346M839.5 301V324M840.5 306V324M841.5 288V306M842.5 293V312M843.5 311V337M844.5 321V350M845.5 292V321M846.5 300V312M847.5 288V320M848.5 319V351M849.5 291V337M850.5 260V293M851.5 293V326M852.5 288V307M853.5 298V316M854.5 315V325M855.5 321V327M856.5 316V322M857.5 311V317M858.5 305V311M859.5 308V315M860.5 301V311M861.5 308V321M862.5 296V322M863.5 313V348M864.5 278V313M865.5 308V339M866.5 293V321M867.5 285V319M868.5 318V352M869.5 308V342M870.5 286V309M871.5 289V305M872.5 274V297M873.5 297V330M874.5 328V339M875.5 311V329M876.5 301V312M877.5 298V302M878.5 301V304M879.5 287V304M880.5 271V287M881.5 276V298M882.5 297V313M883.5 303V308M884.5 306V313M885.5 313V317M886.5 310V324M887.5 324V338M888.5 315V327M889.5 310V320M890.5 279V310M891.5 258V279M892.5 275V302M893.5 302V314M894.5 295V317M895.5 274V297M896.5 297V320M897.5 302V317M898.5 316V346M899.5 343V361M900.5 326V344" stroke="#0000ff" fill="none" stroke-width="1"/></svg>
<svg class="abs" style="left:879.500px;top:185px" width="19" height="11" viewBox="0 0 19 11"><text x="0" y="11" font-family="Liberation Sans" font-weight="bold" font-size="16.200" fill="#ff00ff" textLength="18.500" lengthAdjust="spacingAndGlyphs">MI</text><path d="M0 1.500h19M0 3.500h19M0 5.500h19" stroke="#fff" stroke-width="1" shape-rendering="crispEdges"/></svg>
<span class="cb" style="left:0px;width:75px;text-align:right;top:173.5px;color:#0000ff;letter-spacing:.5px;margin-left:.5px">1</span>
<span class="cb" style="left:0px;width:75px;text-align:right;top:197.5px;color:#0000ff;letter-spacing:.5px;margin-left:.5px">0.8</span>
<span class="cb" style="left:0px;width:75px;text-align:right;top:222.5px;color:#0000ff;letter-spacing:.5px;margin-left:.5px">0.6</span>
<span class="cb" style="left:0px;width:75px;text-align:right;top:247.5px;color:#0000ff;letter-spacing:.5px;margin-left:.5px">0.4</span>
<span class="cb" style="left:0px;width:75px;text-align:right;top:272.5px;color:#0000ff;letter-spacing:.5px;margin-left:.5px">0.2</span>
<span class="cb" style="left:0px;width:75px;text-align:right;top:297.5px;color:#0000ff;letter-spacing:.5px;margin-left:.5px">0</span>
<span class="cb" style="left:0px;width:75px;text-align:right;top:321.5px;color:#0000ff;letter-spacing:.5px;margin-left:.5px">-0.2</span>
<span class="cb" style="left:0px;width:75px;text-align:right;top:346.5px;color:#0000ff;letter-spacing:.5px;margin-left:.5px">-0.4</span>
<span class="cb" style="left:0px;width:75px;text-align:right;top:371.5px;color:#0000ff;letter-spacing:.5px;margin-left:.5px">-0.6</span>
<span class="cb" style="left:0px;width:75px;text-align:right;top:396.5px;color:#0000ff;letter-spacing:.5px;margin-left:.5px">-0.8</span>
<span class="cb" style="left:0px;width:75px;text-align:right;top:421.5px;color:#0000ff;letter-spacing:.5px;margin-left:.5px">-1</span>
<span class="cb" style="left:48px;width:60px;text-align:center;top:434px;letter-spacing:.5px">0</span>
<span class="cb" style="left:130px;width:60px;text-align:center;top:434px;letter-spacing:.5px">0.1</span>
<span class="cb" style="left:212px;width:60px;text-align:center;top:434px;letter-spacing:.5px">0.2</span>
<span class="cb" style="left:294px;width:60px;text-align:center;top:434px;letter-spacing:.5px">0.3</span>
<span class="cb" style="left:376px;width:60px;text-align:center;top:434px;letter-spacing:.5px">0.4</span>
<span class="cb" style="left:459px;width:60px;text-align:center;top:434px;letter-spacing:.5px">0.5</span>
<span class="cb" style="left:541px;width:60px;text-align:center;top:434px;letter-spacing:.5px">0.6</span>
<span class="cb" style="left:623px;width:60px;text-align:center;top:434px;letter-spacing:.5px">0.7</span>
<span class="cb" style="left:705px;width:60px;text-align:center;top:434px;letter-spacing:.5px">0.8</span>
<span class="cb" style="left:787px;width:60px;text-align:center;top:434px;letter-spacing:.5px">0.9</span>
<span class="cb" style="left:870px;width:60px;text-align:center;top:434px;letter-spacing:.5px">1</span>
<span class="cb" style="left:12px;top:448px;letter-spacing:.45px">+01:46:59:791</span>
<span class="cb" style="left:444px;top:448px;letter-spacing:1.6px">WAVEFORM</span>
<span class="cb" style="left:905px;top:446px;">s</span>
<div class="cw" style="left:2px;top:477px;width:950px;height:358px"><div class="cwt" style="height:28px"></div><div style="left:0px;top:0px;right:0px;height:30px"><div style="left:1px;top:0;width:300px;height:30px"><svg style="position:absolute;left:8px;top:9px" width="16" height="16" viewBox="0 0 16 16" shape-rendering="crispEdges"><rect width="16" height="16" fill="#0000ff"/><path d="M1.500 1v13M4.500 5v9M7.500 8v6M10.500 10v4M13.500 11v3M0 14.500h16" stroke="#ffff00" stroke-width="1" fill="none"/></svg><span class="ui" style="left:28px;top:11px;color:#9a9a9a">Spectrum Analyzer</span></div><div class="cwb" style="right:77px;top:8px"><i style="left:10px;top:7px;width:11px;height:5px;border-radius:1.500px"></i></div><div class="cwb" style="right:43px;top:8px"><i style="left:10px;top:3px;width:11px;height:9px;border-radius:1.500px"></i><b style="left:13px;top:6px;width:5px;height:3px"></b></div><div class="cwb" style="right:9px;top:8px"><svg width="12" height="10" viewBox="0 0 12 10" style="position:absolute;left:9px;top:2px"><path d="M1.200 0.700h2.600L6 3.200 8.200 0.700h2.600q0.800 0.300 0.400 1.100L8.300 5l2.900 3.200q0.400 0.800-0.400 1.100H8.200L6 6.800 3.800 9.300H1.200q-0.800-0.300-0.400-1.100L3.700 5 0.800 1.800q-0.400-0.800 0.400-1.100z" fill="#f0f0f0" stroke="#55586a" stroke-width="1" stroke-linejoin="round"/></svg></div></div><div class="cwc" style="left:7px;top:30px;width:934px;height:319px"></div></div>
<div class="" style="left:11px;top:509px;width:17px;height:316px;background:#f0f0f0;background-image:repeating-conic-gradient(#fff 0% 25%,#f0f0f0 0% 50%);background-size:2px 2px"></div>
<div class="rs" style="left:11px;top:509px;width:17px;height:17px;"><svg class="ar" width="7" height="4" viewBox="0 0 7 4"><path d="M0 4h7L3.500 0z" fill="#000"/></svg></div>
<div class="rs" style="left:11px;top:808px;width:17px;height:16px;"><svg class="ar" width="7" height="4" viewBox="0 0 7 4"><path d="M0 0h7L3.500 4z" fill="#000"/></svg></div>
<div class="rs" style="left:11px;top:645px;width:17px;height:17px;"></div>
<span class="cb" style="left:47px;top:510px;color:#0000ff;letter-spacing:.9px">A(dBr)</span>
<span class="cb" style="left:371px;top:510px;color:#0000ff;letter-spacing:.9px">A: Peak Frequency=</span>
<span class="cb" style="left:556px;top:510px;color:#0000ff;letter-spacing:.9px">4.39</span>
<span class="cb" style="left:603px;top:510px;color:#0000ff;letter-spacing:.9px">Hz</span>
<svg class="abs" style="left:0;top:480px" width="960" height="360" viewBox="0 480 960 360" shape-rendering="crispEdges"><path d="M174.5 541V788M254.5 541V788M335.5 541V788M415.5 541V788M496.5 541V788M576.5 541V788M656.5 541V788M737.5 541V788M817.5 541V788M94 590.5H898M94 615.5H898M94 639.5H898M94 664.5H898M94 689.5H898M94 713.5H898M94 738.5H898M94 763.5H898" stroke="#00ff00" stroke-dasharray="3 3" fill="none"/><rect x="94.5" y="541.5" width="804" height="247" fill="none" stroke="#00ff00"/><path d="M94 565.5H898" stroke="#0000ff" fill="none"/></svg>
<svg class="abs" style="left:877.500px;top:545px" width="19" height="11" viewBox="0 0 19 11"><text x="0" y="11" font-family="Liberation Sans" font-weight="bold" font-size="16.200" fill="#ff00ff" textLength="18.500" lengthAdjust="spacingAndGlyphs">MI</text><path d="M0 1.500h19M0 3.500h19M0 5.500h19" stroke="#fff" stroke-width="1" shape-rendering="crispEdges"/></svg>
<span class="cb" style="left:11px;width:80px;text-align:right;top:534px;color:#0000ff;letter-spacing:.5px;margin-left:.5px">20</span>
<span class="cb" style="left:11px;width:80px;text-align:right;top:558px;color:#0000ff;letter-spacing:.5px;margin-left:.5px">0</span>
<span class="cb" style="left:11px;width:80px;text-align:right;top:583px;color:#0000ff;letter-spacing:.5px;margin-left:.5px">-20</span>
<span class="cb" style="left:11px;width:80px;text-align:right;top:608px;color:#0000ff;letter-spacing:.5px;margin-left:.5px">-40</span>
<span class="cb" style="left:11px;width:80px;text-align:right;top:632px;color:#0000ff;letter-spacing:.5px;margin-left:.5px">-60</span>
<span class="cb" style="left:11px;width:80px;text-align:right;top:657px;color:#0000ff;letter-spacing:.5px;margin-left:.5px">-80</span>
<span class="cb" style="left:11px;width:80px;text-align:right;top:682px;color:#0000ff;letter-spacing:.5px;margin-left:.5px">-100</span>
<span class="cb" style="left:11px;width:80px;text-align:right;top:706px;color:#0000ff;letter-spacing:.5px;margin-left:.5px">-120</span>
<span class="cb" style="left:11px;width:80px;text-align:right;top:731px;color:#0000ff;letter-spacing:.5px;margin-left:.5px">-140</span>
<span class="cb" style="left:11px;width:80px;text-align:right;top:756px;color:#0000ff;letter-spacing:.5px;margin-left:.5px">-160</span>
<span class="cb" style="left:11px;width:80px;text-align:right;top:781px;color:#0000ff;letter-spacing:.5px;margin-left:.5px">-180</span>
<span class="cb" style="left:64px;width:60px;text-align:center;top:793px;letter-spacing:.5px">0</span>
<span class="cb" style="left:144px;width:60px;text-align:center;top:793px;letter-spacing:.5px">2.4</span>
<span class="cb" style="left:224px;width:60px;text-align:center;top:793px;letter-spacing:.5px">4.8</span>
<span class="cb" style="left:305px;width:60px;text-align:center;top:793px;letter-spacing:.5px">7.2</span>
<span class="cb" style="left:385px;width:60px;text-align:center;top:793px;letter-spacing:.5px">9.6</span>
<span class="cb" style="left:466px;width:60px;text-align:center;top:793px;letter-spacing:.5px">12</span>
<span class="cb" style="left:546px;width:60px;text-align:center;top:793px;letter-spacing:.5px">14.4</span>
<span class="cb" style="left:626px;width:60px;text-align:center;top:793px;letter-spacing:.5px">16.8</span>
<span class="cb" style="left:707px;width:60px;text-align:center;top:793px;letter-spacing:.5px">19.2</span>
<span class="cb" style="left:787px;width:60px;text-align:center;top:793px;letter-spacing:.5px">21.6</span>
<span class="cb" style="left:868px;width:60px;text-align:center;top:793px;letter-spacing:.5px">24</span>
<span class="cb" style="left:30px;top:807px;letter-spacing:.6px">FFT Segments:1</span>
<span class="cb" style="left:157px;top:807px;letter-spacing:.6px">Resolution: 1.46484Hz</span>
<span class="cb" style="left:326px;top:807px;letter-spacing:1px;font-weight:normal">-C-</span>
<span class="cb" style="left:355px;top:807px;letter-spacing:1.05px">NORMALIZED AMPLITUDE SPECTRUM</span>
<span class="cb" style="left:900px;top:805px;letter-spacing:.5px">kHz</span>
<div class="" style="left:956px;top:117px;width:244px;height:559px;background:#f0f0f0;border:1px solid #c8c8c8;box-shadow:2px 3px 6px rgba(0,0,0,.35)"></div>
<div class="" style="left:957px;top:118px;width:242px;height:25px;background:#fff"></div>
<svg class="abs" style="left:960px;top:122px" width="16" height="16" viewBox="0 0 16 16" shape-rendering="crispEdges"><rect width="16" height="16" fill="#ffff00"/><g fill="none" shape-rendering="auto" stroke-width="1.300"><path d="M0 3.500h1q1 0 1.500-1.500t1.500-1.500h1q1 0 1.500 1.500t1.500 1.500h0.500q1 0 1.500-1.500t1.500-1.500h1q1 0 1.500 1.500t1 1.500" stroke="#ff0000"/><path d="M0.600 9V5.600h3v3h3v-3h3.500v3h3v-3h3" stroke="#00e000" stroke-width="1.500"/><path d="M0 15l3-4.500 3 4.500 3-4.500 3 4.500 3-4.500 1 1.500" stroke="#0000ff"/></g></svg>
<span class="ui" style="left:981px;top:123px;color:#999;letter-spacing:-.35px">Signal Gener...</span>
<svg class="abs" style="left:1075px;top:119px" width="120" height="24" viewBox="0 0 120 24"><g fill="none"><path d="M5 11.500h10" stroke="#999"/><rect x="50.500" y="6.500" width="9" height="9" stroke="#e4e4e4"/><path d="M96 6l10 10M106 6l-10 10" stroke="#777"/></g></svg>
<div class="sk" style="left:962px;top:151px;width:13px;height:13px;background:#fff;"><svg width="7" height="7" viewBox="0 0 7 7" shape-rendering="crispEdges" style="position:absolute;left:3px;top:3px"><path d="M0 2h1v3h-1zM1 3h1v3h-1zM2 4h1v3h-1zM3 3h1v3h-1zM4 2h1v3h-1zM5 1h1v3h-1zM6 0h1v3h-1z" fill="#000"/></svg></div>
<span class="t" style="left:980px;top:150px;color:#000">Show Editor</span>
<div class="sk" style="left:1043px;top:148px;width:128px;height:20px;background:#fff;"></div>
<div class="rs" style="left:1153px;top:150px;width:16px;height:16px;"><svg class="ar" width="7" height="4" viewBox="0 0 7 4"><path d="M0 0h7L3.5 4z" fill="#000"/></svg></div>
<span class="t" style="left:1047.5px;top:151px;color:#000;">iA = oA, iB = oB</span>
<div class="rs" style="left:1172px;top:146px;width:23px;height:23px;"><svg width="10" height="10" viewBox="0 0 10 10" style="position:absolute;left:6px;top:6px"><path d="M0 0l10 5L0 10z" fill="#ff0000"/></svg></div>
<span class="t" style="left:960px;top:177px;color:#a0a0a0">Start OSC after (s)</span>
<div class="sk" style="left:1052px;top:174px;width:80px;height:19px;background:#f0f0f0;"></div>
<span class="t" style="left:1057px;top:176px;color:#6d6d6d;">0</span>
<div class="gb" style="left:959px;top:207px;width:200px;height:36px;"></div>
<span class="t" style="left:966px;top:201px;background:#f0f0f0;padding:0 2px;color:#000">Sampling Parameters</span>
<div class="sk" style="left:965px;top:217px;width:100px;height:20px;background:#fff;"></div>
<div class="rs" style="left:1047px;top:219px;width:16px;height:16px;"><svg class="ar" width="7" height="4" viewBox="0 0 7 4"><path d="M0 0h7L3.5 4z" fill="#000"/></svg></div>
<span class="t" style="left:969.5px;top:220px;color:#000;">48kHz</span>
<div class="sk" style="left:1067px;top:217px;width:45px;height:20px;background:#fff;"></div>
<div class="rs" style="left:1094px;top:219px;width:16px;height:16px;"><svg class="ar" width="7" height="4" viewBox="0 0 7 4"><path d="M0 0h7L3.5 4z" fill="#000"/></svg></div>
<span class="t" style="left:1071.5px;top:220px;color:#000;">A</span>
<div class="sk" style="left:1113px;top:217px;width:40px;height:20px;background:#f0f0f0;"></div>
<div class="sk" style="left:968px;top:255px;width:85px;height:20px;background:#fff;"></div>
<div class="rs" style="left:1035px;top:257px;width:16px;height:16px;"><svg class="ar" width="7" height="4" viewBox="0 0 7 4"><path d="M0 0h7L3.5 4z" fill="#000"/></svg></div>
<span class="t" style="left:972.5px;top:258px;color:#000;">MultiTones</span>
<div class="rs" style="left:1065px;top:254px;width:23px;height:21px;"><span class="t" style="position:absolute;left:0;right:0;text-align:center;top:2px;color:#000;">...</span></div>
<div class="sk" style="left:1101px;top:255px;width:40px;height:20px;background:#f0f0f0;"></div>
<span class="t" style="left:1104px;top:258px;color:#6d6d6d;">Mu</span>
<span class="t" style="left:968px;top:283px;letter-spacing:.05px">C:\VIRTINS Multi-Instrument 3.9</span>
<div class="" style="left:965px;top:318px;width:1px;height:133px;background:#a0a0a0"></div>
<div class="" style="left:966px;top:318px;width:1px;height:133px;background:#696969"></div>
<div class="" style="left:967px;top:318px;width:1px;height:133px;background:#fff"></div>
<div class="" style="left:979px;top:318px;width:1px;height:133px;background:#a0a0a0"></div>
<div class="" style="left:980px;top:318px;width:1px;height:133px;background:#696969"></div>
<div class="" style="left:981px;top:318px;width:1px;height:133px;background:#fff"></div>
<div class="rs" style="left:977px;top:318px;width:11px;height:5px;"></div>
<div class="rs" style="left:961px;top:441px;width:11px;height:5px;"></div>
<span class="t" style="left:1023px;top:309px;">Output Frequency (Hz)</span>
<div class="sk" style="left:992px;top:328px;width:89px;height:20px;background:#f0f0f0;"></div>
<div class="rs" style="left:1063px;top:330px;width:16px;height:16px;"><svg class="ar" width="7" height="4" viewBox="0 0 7 4"><path d="M0 0h7L3.5 4z" fill="#808080"/></svg></div>
<span class="t" style="left:996.5px;top:331px;color:#6d6d6d;">1000</span>
<div class="sk" style="left:1081px;top:328px;width:50px;height:20px;background:#f0f0f0;"></div>
<span class="t" style="left:1084px;top:331px;color:#6d6d6d;">1000</span>
<span class="t" style="left:1025px;top:357px;">Output Amplitude(V)</span>
<div class="sk" style="left:992px;top:380px;width:89px;height:20px;background:#fff;"></div>
<div class="rs" style="left:1063px;top:382px;width:16px;height:16px;"><svg class="ar" width="7" height="4" viewBox="0 0 7 4"><path d="M0 0h7L3.5 4z" fill="#000"/></svg></div>
<span class="t" style="left:996.5px;top:383px;color:#000;">1</span>
<div class="sk" style="left:1081px;top:380px;width:50px;height:20px;background:#f0f0f0;"></div>
<span class="t" style="left:1084px;top:383px;color:#6d6d6d;">1</span>
<span class="t" style="left:996px;top:410px;color:#a0a0a0">Output Phase Difference</span>
<div class="sk" style="left:1040px;top:431px;width:75px;height:20px;background:#f0f0f0;"></div>
<div class="rs" style="left:1097px;top:433px;width:16px;height:16px;"><svg class="ar" width="7" height="4" viewBox="0 0 7 4"><path d="M0 0h7L3.5 4z" fill="#808080"/></svg></div>
<span class="t" style="left:1044.5px;top:434px;color:#6d6d6d;">0</span>
<span class="t" style="left:960px;top:455px;">0.0dBFS</span>
<div class="" style="left:1015px;top:460px;width:110px;height:1px;background:#a0a0a0"></div>
<div class="" style="left:1015px;top:461px;width:110px;height:1px;background:#696969"></div>
<div class="" style="left:1015px;top:462px;width:110px;height:1px;background:#fff"></div>
<div class="rs" style="left:1075px;top:456px;width:5px;height:12px;"></div>
<div class="gb" style="left:959px;top:474px;width:200px;height:47px;"></div>
<div class="sk" style="left:966px;top:480px;width:13px;height:13px;background:#fff;"></div>
<span class="t" style="left:984px;top:479px;color:#000">Mask</span>
<div class="rs" style="left:1029px;top:479px;width:16px;height:15px;"><span class="t" style="position:absolute;left:0;right:0;text-align:center;top:-2px;color:#a0a0a0;">...</span></div>
<span class="t" style="left:1065px;top:481px;color:#a0a0a0">On (s)</span>
<div class="sk" style="left:966px;top:500px;width:13px;height:13px;background:#f0f0f0;"><svg width="7" height="7" viewBox="0 0 7 7" shape-rendering="crispEdges" style="position:absolute;left:3px;top:3px"><path d="M0 2h1v3h-1zM1 3h1v3h-1zM2 4h1v3h-1zM3 3h1v3h-1zM4 2h1v3h-1zM5 1h1v3h-1zM6 0h1v3h-1z" fill="#808080"/></svg></div>
<span class="t" style="left:984px;top:499px;color:#a0a0a0">Phase Lock</span>
<div class="sk" style="left:1052px;top:497px;width:80px;height:20px;background:#f0f0f0;"></div>
<span class="t" style="left:1055px;top:500px;color:#6d6d6d;">1</span>
<div class="gb" style="left:959px;top:526px;width:200px;height:45px;"></div>
<div class="sk" style="left:966px;top:541px;width:13px;height:13px;background:#fff;"></div>
<span class="t" style="left:984px;top:540px;color:#000">Fade</span>
<span class="t" style="left:1065px;top:531px;color:#a0a0a0">In (s)</span>
<div class="sk" style="left:1052px;top:548px;width:80px;height:20px;background:#f0f0f0;"></div>
<span class="t" style="left:1055px;top:551px;color:#6d6d6d;">0.01</span>
<div class="gb" style="left:959px;top:576px;width:200px;height:47px;"></div>
<span class="t" style="left:962px;top:580px;">Modulation</span>
<span class="t" style="left:1035px;top:580px;color:#a0a0a0">Carrier (Hz)</span>
<span class="t" style="left:1110px;top:580px;color:#a0a0a0">Mo</span>
<div class="sk" style="left:962px;top:598px;width:59px;height:20px;background:#fff;"></div>
<div class="rs" style="left:1003px;top:600px;width:16px;height:16px;"><svg class="ar" width="7" height="4" viewBox="0 0 7 4"><path d="M0 0h7L3.5 4z" fill="#000"/></svg></div>
<span class="t" style="left:966.5px;top:601px;color:#000;">NIL</span>
<div class="sk" style="left:1035px;top:598px;width:66px;height:20px;background:#f0f0f0;"></div>
<span class="t" style="left:1038px;top:601px;color:#6d6d6d;">0</span>
<span class="t" style="left:959px;top:631px;">Duration (s)</span>
<div class="sk" style="left:1023px;top:629px;width:66px;height:20px;background:#f0f0f0;"></div>
<span class="t" style="left:1026px;top:632px;color:#6d6d6d;">1</span>
<div class="sk" style="left:1095px;top:632px;width:13px;height:13px;background:#fff;"><svg width="7" height="7" viewBox="0 0 7 7" shape-rendering="crispEdges" style="position:absolute;left:3px;top:3px"><path d="M0 2h1v3h-1zM1 3h1v3h-1zM2 4h1v3h-1zM3 3h1v3h-1zM4 2h1v3h-1zM5 1h1v3h-1zM6 0h1v3h-1z" fill="#000"/></svg></div>
<span class="t" style="left:1113px;top:631px;color:#000">L</span>
<div class="sk" style="left:959px;top:656px;width:13px;height:13px;background:#fff;"></div>
<span class="t" style="left:977px;top:655px;color:#000">Sweep</span>
<svg class="rd" style="left:1036px;top:656px" width="12" height="12" viewBox="0 0 12 12"><circle cx="6" cy="6" r="5.5" fill="#fff"/><path d="M10 2A5.6 5.6 0 1 0 2 10" stroke="#a0a0a0" fill="none"/><path d="M2 10A5.6 5.6 0 0 0 10 2" stroke="#fff" fill="none"/><path d="M9.2 2.8A4.5 4.5 0 1 0 2.8 9.2" stroke="#696969" fill="none"/><path d="M2.8 9.2A4.5 4.5 0 0 0 9.2 2.8" stroke="#e3e3e3" fill="none"/><circle cx="6" cy="6" r="4" fill="#f0f0f0"/><circle cx="6" cy="6" r="2" fill="#808080"/></svg>
<span class="t" style="left:1053px;top:655px;color:#a0a0a0">Frequency</span>
<div class="" style="left:1115px;top:171px;width:500px;height:653px;background:#f0f0f0;border:1px solid #707070;box-shadow:0 3px 10px 2px rgba(0,0,0,.4)"></div>
<div class="" style="left:1116px;top:172px;width:484px;height:25px;background:#fff"></div>
<span class="ui" style="left:1119px;top:177px;">MultiTones Configuration</span>
<svg class="abs" style="left:1590px;top:178px" width="10" height="12" viewBox="0 0 10 12"><path d="M4 1l10 10M14 1l-10 10" stroke="#000" fill="none"/></svg>
<div class="gb" style="left:1125px;top:208px;width:490px;height:404px;"></div>
<span class="t" style="left:1131px;top:202px;background:#f0f0f0;padding:0 2px;color:#a0a0a0">Manual</span>
<div class="sk" style="left:1136px;top:258px;width:13px;height:13px;background:#f0f0f0;"></div>
<span class="t" style="left:1154px;top:257px;color:#a0a0a0">No Spectral Leakage</span>
<span class="t" style="left:1365px;top:217px;color:#a0a0a0">Channel A</span>
<div class="sk" style="left:1308px;top:234px;width:277px;height:167px;background:#fff;"></div>
<div class="rs" style="left:1262px;top:275px;width:38px;height:37px;"><span class="t" style="position:absolute;left:0;right:0;text-align:center;top:11px;color:#a0a0a0;">-&gt;</span></div>
<div class="rs" style="left:1262px;top:322px;width:38px;height:34px;"><span class="t" style="position:absolute;left:0;right:0;text-align:center;top:9px;color:#a0a0a0;">&lt;-</span></div>
<span class="t" style="left:1138px;top:303px;color:#a0a0a0">Waveform</span>
<div class="sk" style="left:1136px;top:320px;width:116px;height:20px;background:#f0f0f0;"></div>
<div class="rs" style="left:1234px;top:322px;width:16px;height:16px;"><svg class="ar" width="7" height="4" viewBox="0 0 7 4"><path d="M0 0h7L3.5 4z" fill="#808080"/></svg></div>
<span class="t" style="left:1140px;top:323px;color:#6d6d6d;">Sine</span>
<span class="t" style="left:1138px;top:348px;color:#a0a0a0">Frequency (Hz)</span>
<div class="sk" style="left:1136px;top:364px;width:116px;height:20px;background:#f0f0f0;"></div>
<div class="rs" style="left:1234px;top:366px;width:16px;height:16px;"><svg class="ar" width="7" height="4" viewBox="0 0 7 4"><path d="M0 0h7L3.5 4z" fill="#808080"/></svg></div>
<span class="t" style="left:1140px;top:367px;color:#6d6d6d;">1k</span>
<span class="t" style="left:1138px;top:395px;color:#a0a0a0">Relative Amplitude</span>
<div class="sk" style="left:1136px;top:411px;width:116px;height:20px;background:#f0f0f0;"></div>
<div class="rs" style="left:1234px;top:413px;width:16px;height:16px;"><svg class="ar" width="7" height="4" viewBox="0 0 7 4"><path d="M0 0h7L3.5 4z" fill="#808080"/></svg></div>
<span class="t" style="left:1140px;top:414px;color:#6d6d6d;">1.0</span>
<span class="t" style="left:1138px;top:442px;color:#a0a0a0">Phase</span>
<div class="sk" style="left:1136px;top:458px;width:116px;height:20px;background:#f0f0f0;"></div>
<div class="rs" style="left:1234px;top:460px;width:16px;height:16px;"><svg class="ar" width="7" height="4" viewBox="0 0 7 4"><path d="M0 0h7L3.5 4z" fill="#808080"/></svg></div>
<span class="t" style="left:1140px;top:461px;color:#6d6d6d;">0</span>
<span class="t" style="left:1365px;top:412px;color:#a0a0a0">Channel B</span>
<div class="sk" style="left:1308px;top:431px;width:277px;height:167px;background:#fff;"></div>
<div class="rs" style="left:1262px;top:475px;width:38px;height:34px;"><span class="t" style="position:absolute;left:0;right:0;text-align:center;top:9px;color:#a0a0a0;">-&gt;</span></div>
<div class="rs" style="left:1262px;top:525px;width:38px;height:34px;"><span class="t" style="position:absolute;left:0;right:0;text-align:center;top:9px;color:#a0a0a0;">&lt;-</span></div>
<div class="rs" style="left:1136px;top:520px;width:117px;height:24px;"><span class="t" style="position:absolute;left:0;right:0;text-align:center;top:4px;color:#a0a0a0;">Phase Optimization</span></div>
<div class="rs" style="left:1136px;top:548px;width:117px;height:24px;"><span class="t" style="position:absolute;left:0;right:0;text-align:center;top:4px;color:#a0a0a0;">Save</span></div>
<div class="rs" style="left:1136px;top:576px;width:117px;height:24px;"><span class="t" style="position:absolute;left:0;right:0;text-align:center;top:4px;color:#a0a0a0;">Load</span></div>
<div class="sk" style="left:1125px;top:625px;width:13px;height:13px;background:#fff;"><svg width="7" height="7" viewBox="0 0 7 7" shape-rendering="crispEdges" style="position:absolute;left:3px;top:3px"><path d="M0 2h1v3h-1zM1 3h1v3h-1zM2 4h1v3h-1zM3 3h1v3h-1zM4 2h1v3h-1zM5 1h1v3h-1zM6 0h1v3h-1z" fill="#000"/></svg></div>
<span class="t" style="left:1143px;top:624px;color:#000">Automatic</span>
<div class="rs" style="left:1251px;top:620px;width:116px;height:24px;"><span class="t" style="position:absolute;left:0;right:0;text-align:center;top:4px;color:#000;">Crest Factor Preview</span></div>
<div class="gb" style="left:1125px;top:652px;width:490px;height:125px;"></div>
<span class="t" style="left:1133px;top:672px;color:#a0a0a0">Frequency Range (Hz)</span>
<div class="sk" style="left:1251px;top:667px;width:77px;height:24px;background:#f0f0f0;"></div>
<span class="t" style="left:1254px;top:669px;color:#6d6d6d;">20</span>
<span class="t" style="left:1336px;top:670px;color:#a0a0a0">~</span>
<div class="sk" style="left:1352px;top:667px;width:77px;height:24px;background:#f0f0f0;"></div>
<span class="t" style="left:1355px;top:669px;color:#6d6d6d;">20000</span>
<span class="t" style="left:1440px;top:672px;">Align to</span>
<div class="sk" style="left:1487px;top:670px;width:107px;height:21px;background:#fff;"></div>
<div class="rs" style="left:1576px;top:672px;width:16px;height:17px;"><svg class="ar" width="7" height="4" viewBox="0 0 7 4"><path d="M0 0h7L3.5 4z" fill="#000"/></svg></div>
<span class="t" style="left:1491px;top:673px;color:#000;">FFT</span>
<span class="t" style="left:1133px;top:707px;">Frequency Response</span>
<div class="sk" style="left:1251px;top:704px;width:119px;height:21px;background:#fff;"></div>
<div class="rs" style="left:1352px;top:706px;width:16px;height:17px;"><svg class="ar" width="7" height="4" viewBox="0 0 7 4"><path d="M0 0h7L3.5 4z" fill="#000"/></svg></div>
<span class="t" style="left:1255px;top:707px;color:#000;">Arbitrary</span>
<span class="t" style="left:1410px;top:707px;">Phase</span>
<div class="sk" style="left:1460px;top:704px;width:135px;height:21px;background:#fff;"></div>
<div class="rs" style="left:1577px;top:706px;width:16px;height:17px;"><svg class="ar" width="7" height="4" viewBox="0 0 7 4"><path d="M0 0h7L3.5 4z" fill="#000"/></svg></div>
<span class="t" style="left:1464px;top:707px;color:#000;">Randomized</span>
<div class="sk" style="left:1133px;top:737px;width:410px;height:23px;background:#f0f0f0;"></div>
<span class="t" style="left:1136px;top:740px;color:#6d6d6d;letter-spacing:0">C:\VIRTINS Multi-Instrument 3.9\frf\RecordingRIAA.frf</span>
<div class="rs" style="left:1548px;top:735px;width:23px;height:24px;"><svg style="position:absolute" style="left:4px;top:3px;opacity:1" width="16" height="15" viewBox="0 0 16 15"><path d="M0.500 13.500V4.500h2l1-1h3l1 1h4v3" fill="#ffff99" stroke="#000"/><path d="M0.500 13.500l3-6h12l-3 6z" fill="#808000" stroke="#000"/><path d="M9.500 2.500c2-2 4-2 5 0.500m0.500-2v2.500h-2.500" fill="none" stroke="#000"/></svg></div>
<div class="rs" style="left:1575px;top:735px;width:23px;height:24px;"><svg style="position:absolute;left:3px;top:3px" width="16" height="16" viewBox="0 0 16 16" shape-rendering="crispEdges"><rect width="16" height="16" fill="#000"/><rect x="0" y="0" width="16" height="3" fill="#000080"/><g fill="#fff"><rect x="1" y="3" width="3" height="3"/><rect x="5" y="3" width="3" height="3"/><rect x="9" y="3" width="3" height="3"/><rect x="13" y="3" width="2" height="3"/><rect x="1" y="7" width="3" height="4"/><rect x="5" y="7" width="3" height="4"/><rect x="9" y="7" width="3" height="4"/><rect x="13" y="7" width="2" height="4"/><rect x="1" y="12" width="3" height="3"/><rect x="5" y="12" width="3" height="3"/><rect x="9" y="12" width="3" height="3"/><rect x="13" y="12" width="2" height="3"/></g><path d="M15.500 5L8.500 12.500" stroke="#000080" stroke-width="3" stroke-dasharray="1 1" shape-rendering="auto"/><path d="M16 4.500L8.500 12.500H10.500" stroke="#ffff00" stroke-width="1.600" fill="none" shape-rendering="auto"/></svg></div>
<div class="" style="left:1117px;top:759px;width:354px;height:5px;background:#ed1c24;border-radius:3px"></div>
<div class="" style="left:1530px;top:789px;width:77px;height:24px;background:#000"></div>
<div class="rs" style="left:1531px;top:790px;width:75px;height:22px;"><span class="t" style="position:absolute;left:0;right:0;text-align:center;top:3px;color:#000;">Close</span></div>
<div class="" style="left:0px;top:836px;width:1600px;height:24px;background:#f0f0f0"></div>
<div class="" style="left:3px;top:838px;width:1px;height:20px;background:#fff"></div>
<div class="" style="left:4px;top:838px;width:1px;height:20px;background:#a0a0a0"></div>
<span class="tb" style="left:19px;top:840px;">F</span>
<div class="sk" style="left:30px;top:837px;width:128px;height:23px;background:#fff;"></div>
<div class="rs" style="left:140px;top:839px;width:16px;height:19px;"><svg class="ar" width="7" height="4" viewBox="0 0 7 4"><path d="M0 0h7L3.5 4z" fill="#000"/></svg></div>
<span class="tb" style="left:34px;top:842px;color:#000;">Auto</span>
<div class="sk" style="left:158px;top:837px;width:101px;height:23px;background:#fff;"></div>
<div class="rs" style="left:241px;top:839px;width:16px;height:19px;"><svg class="ar" width="7" height="4" viewBox="0 0 7 4"><path d="M0 0h7L3.5 4z" fill="#000"/></svg></div>
<span class="tb" style="left:162px;top:842px;color:#000;">×1</span>
<span class="tb" style="left:262px;top:840px;color:#0000ff">A</span>
<div class="sk" style="left:276px;top:837px;width:129px;height:23px;background:#fff;"></div>
<div class="rs" style="left:387px;top:839px;width:16px;height:19px;"><svg class="ar" width="7" height="4" viewBox="0 0 7 4"><path d="M0 0h7L3.5 4z" fill="#000"/></svg></div>
<span class="tb" style="left:280px;top:842px;color:#0000ff;">-200dB</span>
<div class="sk" style="left:405px;top:837px;width:92px;height:23px;background:#fff;"></div>
<div class="rs" style="left:479px;top:839px;width:16px;height:19px;"><svg class="ar" width="7" height="4" viewBox="0 0 7 4"><path d="M0 0h7L3.5 4z" fill="#000"/></svg></div>
<span class="tb" style="left:409px;top:842px;color:#0000ff;">×1</span>
<span class="tb" style="left:501px;top:840px;">M</span>
<div class="sk" style="left:518px;top:837px;width:258px;height:23px;background:#fff;"></div>
<div class="rs" style="left:758px;top:839px;width:16px;height:19px;"><svg class="ar" width="7" height="4" viewBox="0 0 7 4"><path d="M0 0h7L3.5 4z" fill="#000"/></svg></div>
<span class="tb" style="left:522px;top:842px;color:#000;">Amplitude Spectrum</span>
<span class="tb" style="left:779px;top:840px;color:#ff0000">B</span>
<div class="sk" style="left:793px;top:837px;width:128px;height:23px;background:#fff;"></div>
<div class="rs" style="left:903px;top:839px;width:16px;height:19px;"><svg class="ar" width="7" height="4" viewBox="0 0 7 4"><path d="M0 0h7L3.5 4z" fill="#808080"/></svg></div>
<span class="tb" style="left:797px;top:842px;color:#6d6d6d;font-weight:normal">Off</span>
<div class="sk" style="left:922px;top:837px;width:93px;height:23px;background:#fff;"></div>
<div class="rs" style="left:997px;top:839px;width:16px;height:19px;"><svg class="ar" width="7" height="4" viewBox="0 0 7 4"><path d="M0 0h7L3.5 4z" fill="#808080"/></svg></div>
<span class="tb" style="left:926px;top:842px;color:#6d6d6d;font-weight:normal">Off</span>
<span class="tb" style="left:1021px;top:840px;">FFT</span>
<div class="sk" style="left:1052px;top:837px;width:132px;height:23px;background:#fff;"></div>
<div class="rs" style="left:1166px;top:839px;width:16px;height:19px;"><svg class="ar" width="7" height="4" viewBox="0 0 7 4"><path d="M0 0h7L3.5 4z" fill="#000"/></svg></div>
<span class="tb" style="left:1056px;top:842px;color:#000;">32768</span>
<span class="tb" style="left:1198px;top:840px;">WND</span>
<div class="sk" style="left:1246px;top:837px;width:227px;height:23px;background:#fff;"></div>
<div class="rs" style="left:1455px;top:839px;width:16px;height:19px;"><svg class="ar" width="7" height="4" viewBox="0 0 7 4"><path d="M0 0h7L3.5 4z" fill="#000"/></svg></div>
<span class="tb" style="left:1250px;top:842px;color:#000;">Rectangle</span>
<div class="sk" style="left:1474px;top:837px;width:124px;height:23px;background:#fff;"></div>
<div class="rs" style="left:1580px;top:839px;width:16px;height:19px;"><svg class="ar" width="7" height="4" viewBox="0 0 7 4"><path d="M0 0h7L3.5 4z" fill="#000"/></svg></div>
<span class="tb" style="left:1478px;top:842px;color:#000;">0%</span>
<div class="" style="left:198px;top:914px;width:706px;height:600px;background:#f0f0f0;border:1px solid #707070"></div>
<div class="" style="left:199px;top:915px;width:704px;height:25px;background:#fff"></div>
<span class="ui" style="left:202px;top:920px;letter-spacing:-.15px">Spectrum Analyzer Properties</span>
<svg class="abs" style="left:881px;top:921px" width="13" height="13" viewBox="0 0 13 13"><path d="M1 1l11 11M12 1l-11 11" stroke="#000" stroke-width="1.200" fill="none"/></svg>
<div class="" style="left:211px;top:971px;width:683px;height:520px;border:1px solid;border-color:#fff #696969 #696969 #fff;box-shadow:inset -1px 0 0 #a0a0a0"></div>
<div class="" style="left:278px;top:954px;width:47px;height:17px;background:#f0f0f0;border:1px solid;border-color:#fff #696969 #f0f0f0 #fff;border-bottom:none;border-radius:2px 2px 0 0;box-shadow:inset -1px 0 0 #a0a0a0"></div>
<span class="t" style="left:282px;top:956px;">X Scale</span>
<div class="" style="left:326px;top:954px;width:48px;height:17px;background:#f0f0f0;border:1px solid;border-color:#fff #696969 #f0f0f0 #fff;border-bottom:none;border-radius:2px 2px 0 0;box-shadow:inset -1px 0 0 #a0a0a0"></div>
<span class="t" style="left:330px;top:956px;">Y Scale</span>
<div class="" style="left:375px;top:954px;width:75px;height:17px;background:#f0f0f0;border:1px solid;border-color:#fff #696969 #f0f0f0 #fff;border-bottom:none;border-radius:2px 2px 0 0;box-shadow:inset -1px 0 0 #a0a0a0"></div>
<span class="t" style="left:379px;top:956px;">Chart Options</span>
<div class="" style="left:451px;top:954px;width:61px;height:17px;background:#f0f0f0;border:1px solid;border-color:#fff #696969 #f0f0f0 #fff;border-bottom:none;border-radius:2px 2px 0 0;box-shadow:inset -1px 0 0 #a0a0a0"></div>
<span class="t" style="left:455px;top:956px;">Reference</span>
<div class="" style="left:211px;top:952px;width:67px;height:21px;background:#f0f0f0;border:1px solid;border-color:#fff #696969 #f0f0f0 #fff;border-bottom:none;border-radius:2px 2px 0 0;box-shadow:inset -1px 0 0 #a0a0a0"></div>
<span class="t" style="left:218px;top:954px;">Processing</span>
<div class="gb" style="left:225px;top:987px;width:656px;height:155px;"></div>
<span class="t" style="left:232px;top:981px;background:#f0f0f0;padding:0 2px;color:#000">1. Intra-Frame Processing</span>
<div class="sk" style="left:228px;top:1002px;width:13px;height:13px;background:#fff;"><svg width="7" height="7" viewBox="0 0 7 7" shape-rendering="crispEdges" style="position:absolute;left:3px;top:3px"><path d="M0 2h1v3h-1zM1 3h1v3h-1zM2 4h1v3h-1zM3 3h1v3h-1zM4 2h1v3h-1zM5 1h1v3h-1zM6 0h1v3h-1z" fill="#000"/></svg></div>
<span class="t" style="left:246px;top:1001px;color:#000">Remove DC</span>
<div class="sk" style="left:228px;top:1029px;width:13px;height:13px;background:#fff;"><svg width="7" height="7" viewBox="0 0 7 7" shape-rendering="crispEdges" style="position:absolute;left:3px;top:3px"><path d="M0 2h1v3h-1zM1 3h1v3h-1zM2 4h1v3h-1zM3 3h1v3h-1zM4 2h1v3h-1zM5 1h1v3h-1zM6 0h1v3h-1z" fill="#000"/></svg></div>
<span class="t" style="left:246px;top:1028px;color:#000">Compensation 1</span>
<div class="sk" style="left:331px;top:1025px;width:315px;height:20px;background:#f0f0f0;"></div>
<span class="t" style="left:334px;top:1028px;color:#6d6d6d;letter-spacing:0">C:\VIRTINS Multi-Instrument 3.9\fcf\ReproducingRIAA.fcf</span>
<div class="rs" style="left:648px;top:1022px;width:23px;height:23px;"><svg style="position:absolute;left:3px;top:4px;opacity:1" width="16" height="15" viewBox="0 0 16 15"><path d="M0.500 13.500V4.500h2l1-1h3l1 1h4v3" fill="#ffff99" stroke="#000"/><path d="M0.500 13.500l3-6h12l-3 6z" fill="#808000" stroke="#000"/><path d="M9.500 2.500c2-2 4-2 5 0.500m0.500-2v2.500h-2.500" fill="none" stroke="#000"/></svg></div>
<div class="rs" style="left:672px;top:1022px;width:23px;height:23px;"><svg style="position:absolute;left:3px;top:3px;opacity:1" width="16" height="16" viewBox="0 0 16 16" shape-rendering="crispEdges"><rect width="16" height="16" fill="#000"/><rect x="0" y="0" width="16" height="3" fill="#000080"/><g fill="#fff"><rect x="1" y="3" width="3" height="3"/><rect x="5" y="3" width="3" height="3"/><rect x="9" y="3" width="3" height="3"/><rect x="13" y="3" width="2" height="3"/><rect x="1" y="7" width="3" height="4"/><rect x="5" y="7" width="3" height="4"/><rect x="9" y="7" width="3" height="4"/><rect x="13" y="7" width="2" height="4"/><rect x="1" y="12" width="3" height="3"/><rect x="5" y="12" width="3" height="3"/><rect x="9" y="12" width="3" height="3"/><rect x="13" y="12" width="2" height="3"/></g><path d="M15.500 5L8.500 12.500" stroke="#000080" stroke-width="3" stroke-dasharray="1 1" shape-rendering="auto"/><path d="M16 4.500L8.500 12.500H10.500" stroke="#ffff00" stroke-width="1.600" fill="none" shape-rendering="auto"/></svg></div>
<div class="sk" style="left:228px;top:1058px;width:13px;height:13px;background:#fff;"></div>
<span class="t" style="left:246px;top:1057px;color:#000">Compensation 2</span>
<div class="sk" style="left:331px;top:1053px;width:315px;height:19px;background:#f0f0f0;"></div>
<div class="rs" style="left:648px;top:1050px;width:23px;height:23px;"><svg style="position:absolute;left:3px;top:4px;opacity:0.45" width="16" height="15" viewBox="0 0 16 15"><path d="M0.500 13.500V4.500h2l1-1h3l1 1h4v3" fill="#ffff99" stroke="#000"/><path d="M0.500 13.500l3-6h12l-3 6z" fill="#808000" stroke="#000"/><path d="M9.500 2.500c2-2 4-2 5 0.500m0.500-2v2.500h-2.500" fill="none" stroke="#000"/></svg></div>
<div class="rs" style="left:672px;top:1050px;width:23px;height:23px;"><svg style="position:absolute;left:3px;top:3px;opacity:0.45" width="16" height="16" viewBox="0 0 16 16" shape-rendering="crispEdges"><rect width="16" height="16" fill="#000"/><rect x="0" y="0" width="16" height="3" fill="#000080"/><g fill="#fff"><rect x="1" y="3" width="3" height="3"/><rect x="5" y="3" width="3" height="3"/><rect x="9" y="3" width="3" height="3"/><rect x="13" y="3" width="2" height="3"/><rect x="1" y="7" width="3" height="4"/><rect x="5" y="7" width="3" height="4"/><rect x="9" y="7" width="3" height="4"/><rect x="13" y="7" width="2" height="4"/><rect x="1" y="12" width="3" height="3"/><rect x="5" y="12" width="3" height="3"/><rect x="9" y="12" width="3" height="3"/><rect x="13" y="12" width="2" height="3"/></g><path d="M15.500 5L8.500 12.500" stroke="#000080" stroke-width="3" stroke-dasharray="1 1" shape-rendering="auto"/><path d="M16 4.500L8.500 12.500H10.500" stroke="#ffff00" stroke-width="1.600" fill="none" shape-rendering="auto"/></svg></div>
<span class="t" style="left:234px;top:1090px;">Weighting</span>
<div class="sk" style="left:295px;top:1087px;width:197px;height:20px;background:#fff;"></div>
<div class="rs" style="left:474px;top:1089px;width:16px;height:16px;"><svg class="ar" width="7" height="4" viewBox="0 0 7 4"><path d="M0 0h7L3.5 4z" fill="#000"/></svg></div>
<span class="t" style="left:298px;top:1090px;color:#000;">Flat</span>
<span class="t" style="left:516px;top:1090px;color:#a0a0a0">Apply to</span>
<div class="sk" style="left:582px;top:1085px;width:72px;height:20px;background:#f0f0f0;"></div>
<div class="rs" style="left:636px;top:1087px;width:16px;height:16px;"><svg class="ar" width="7" height="4" viewBox="0 0 7 4"><path d="M0 0h7L3.5 4z" fill="#808080"/></svg></div>
<span class="t" style="left:585px;top:1088px;color:#6d6d6d;">A&amp;B</span>
<div class="sk" style="left:229px;top:1120px;width:13px;height:13px;background:#fff;"></div>
<span class="t" style="left:247px;top:1119px;color:#000">Smoothing via Moving Average</span>
<div class="sk" style="left:417px;top:1116px;width:39px;height:22px;background:#f0f0f0;"></div>
<span class="t" style="left:420px;top:1118px;color:#6d6d6d;">1</span>
<span class="t" style="left:463px;top:1121px;color:#a0a0a0">Points</span>
<div class="sk" style="left:521px;top:1116px;width:92px;height:20px;background:#f0f0f0;"></div>
<div class="rs" style="left:595px;top:1118px;width:16px;height:16px;"><svg class="ar" width="7" height="4" viewBox="0 0 7 4"><path d="M0 0h7L3.5 4z" fill="#808080"/></svg></div>
<span class="t" style="left:524px;top:1119px;color:#6d6d6d;">Linear</span>
<div class="sk" style="left:702px;top:995px;width:13px;height:13px;background:#fff;"></div>
<span class="t" style="left:720px;top:994px;color:#000">Sound Quality</span>
<div class="sk" style="left:720px;top:1014px;width:91px;height:20px;background:#f0f0f0;"></div>
<div class="rs" style="left:793px;top:1016px;width:16px;height:16px;"><svg class="ar" width="7" height="4" viewBox="0 0 7 4"><path d="M0 0h7L3.5 4z" fill="#808080"/></svg></div>
<span class="t" style="left:723px;top:1017px;color:#6d6d6d;">Free Field</span>
<div class="sk" style="left:702px;top:1046px;width:13px;height:13px;background:#f0f0f0;"></div>
<span class="t" style="left:720px;top:1045px;color:#a0a0a0">Circular Correlation</span>
<div class="sk" style="left:702px;top:1068px;width:13px;height:13px;background:#f0f0f0;"></div>
<span class="t" style="left:720px;top:1067px;color:#a0a0a0">Generalized Cross Correlation</span>
<div class="sk" style="left:702px;top:1089px;width:13px;height:13px;background:#fff;"></div>
<span class="t" style="left:720px;top:1088px;color:#000">Noise Rating &amp; Criterion</span>
<div class="gb" style="left:225px;top:1158px;width:656px;height:68px;"></div>
<span class="t" style="left:232px;top:1152px;background:#f0f0f0;padding:0 2px;color:#000">2. Inter-Frame Processing</span>
<svg class="rd" style="left:239px;top:1175px" width="12" height="12" viewBox="0 0 12 12"><circle cx="6" cy="6" r="5.5" fill="#fff"/><path d="M10 2A5.6 5.6 0 1 0 2 10" stroke="#a0a0a0" fill="none"/><path d="M2 10A5.6 5.6 0 0 0 10 2" stroke="#fff" fill="none"/><path d="M9.2 2.8A4.5 4.5 0 1 0 2.8 9.2" stroke="#696969" fill="none"/><path d="M2.8 9.2A4.5 4.5 0 0 0 9.2 2.8" stroke="#e3e3e3" fill="none"/><circle cx="6" cy="6" r="4" fill="#fff"/><circle cx="6" cy="6" r="2" fill="#000"/></svg>
<span class="t" style="left:256px;top:1174px;color:#000">None</span>
<svg class="rd" style="left:316px;top:1175px" width="12" height="12" viewBox="0 0 12 12"><circle cx="6" cy="6" r="5.5" fill="#fff"/><path d="M10 2A5.6 5.6 0 1 0 2 10" stroke="#a0a0a0" fill="none"/><path d="M2 10A5.6 5.6 0 0 0 10 2" stroke="#fff" fill="none"/><path d="M9.2 2.8A4.5 4.5 0 1 0 2.8 9.2" stroke="#696969" fill="none"/><path d="M2.8 9.2A4.5 4.5 0 0 0 9.2 2.8" stroke="#e3e3e3" fill="none"/><circle cx="6" cy="6" r="4" fill="#fff"/></svg>
<span class="t" style="left:333px;top:1174px;color:#000">Peak Hold</span>
<svg class="rd" style="left:416px;top:1175px" width="12" height="12" viewBox="0 0 12 12"><circle cx="6" cy="6" r="5.5" fill="#fff"/><path d="M10 2A5.6 5.6 0 1 0 2 10" stroke="#a0a0a0" fill="none"/><path d="M2 10A5.6 5.6 0 0 0 10 2" stroke="#fff" fill="none"/><path d="M9.2 2.8A4.5 4.5 0 1 0 2.8 9.2" stroke="#696969" fill="none"/><path d="M2.8 9.2A4.5 4.5 0 0 0 9.2 2.8" stroke="#e3e3e3" fill="none"/><circle cx="6" cy="6" r="4" fill="#fff"/></svg>
<span class="t" style="left:433px;top:1174px;color:#000">Linear Average</span>
<svg class="rd" style="left:551px;top:1175px" width="12" height="12" viewBox="0 0 12 12"><circle cx="6" cy="6" r="5.5" fill="#fff"/><path d="M10 2A5.6 5.6 0 1 0 2 10" stroke="#a0a0a0" fill="none"/><path d="M2 10A5.6 5.6 0 0 0 10 2" stroke="#fff" fill="none"/><path d="M9.2 2.8A4.5 4.5 0 1 0 2.8 9.2" stroke="#696969" fill="none"/><path d="M2.8 9.2A4.5 4.5 0 0 0 9.2 2.8" stroke="#e3e3e3" fill="none"/><circle cx="6" cy="6" r="4" fill="#fff"/></svg>
<span class="t" style="left:568px;top:1174px;color:#000">Exponential Average</span>
<span class="t" style="left:291px;top:1199px;color:#a0a0a0">Frames</span>
<div class="sk" style="left:337px;top:1197px;width:87px;height:20px;background:#f0f0f0;"></div>
<div class="rs" style="left:406px;top:1199px;width:16px;height:16px;"><svg class="ar" width="7" height="4" viewBox="0 0 7 4"><path d="M0 0h7L3.5 4z" fill="#808080"/></svg></div>
<span class="t" style="left:340px;top:1200px;color:#6d6d6d;">Forever</span>
<div class="rs" style="left:433px;top:1196px;width:48px;height:22px;"><span class="t" style="position:absolute;left:0;right:0;text-align:center;top:3px;color:#a0a0a0;">Reset</span></div>
<div class="sk" style="left:567px;top:1194px;width:61px;height:22px;background:#f0f0f0;"></div>
<span class="t" style="left:570px;top:1196px;color:#6d6d6d;">10</span>
<span class="t" style="left:630px;top:1196px;color:#a0a0a0">%</span>
<div class="sk" style="left:715px;top:1176px;width:13px;height:13px;background:#fff;"></div>
<span class="t" style="left:733px;top:1175px;color:#000">Cross Correlation Average</span>
<div class="sk" style="left:733px;top:1198px;width:13px;height:13px;background:#f0f0f0;"></div>
<span class="t" style="left:751px;top:1197px;color:#a0a0a0">In Phase</span>
<div class="gb" style="left:225px;top:1237px;width:656px;height:300px;"></div>
<span class="t" style="left:232px;top:1231px;background:#f0f0f0;padding:0 2px;color:#000">3. Parameter Measurement</span>
<svg class="rd" style="left:230px;top:1253px" width="12" height="12" viewBox="0 0 12 12"><circle cx="6" cy="6" r="5.5" fill="#fff"/><path d="M10 2A5.6 5.6 0 1 0 2 10" stroke="#a0a0a0" fill="none"/><path d="M2 10A5.6 5.6 0 0 0 10 2" stroke="#fff" fill="none"/><path d="M9.2 2.8A4.5 4.5 0 1 0 2.8 9.2" stroke="#696969" fill="none"/><path d="M2.8 9.2A4.5 4.5 0 0 0 9.2 2.8" stroke="#e3e3e3" fill="none"/><circle cx="6" cy="6" r="4" fill="#fff"/><circle cx="6" cy="6" r="2" fill="#000"/></svg>
<span class="t" style="left:247px;top:1252px;color:#000">None</span>
<div class="sk" style="left:316px;top:1252px;width:13px;height:13px;background:#fff;"></div>
<span class="t" style="left:334px;top:1251px;color:#000">Wow &amp; Flutter</span>
<div class="sk" style="left:429px;top:1252px;width:13px;height:13px;background:#f0f0f0;"></div>
<span class="t" style="left:447px;top:1251px;color:#a0a0a0">Unweighted</span>
<svg class="rd" style="left:230px;top:1274px" width="12" height="12" viewBox="0 0 12 12"><circle cx="6" cy="6" r="5.5" fill="#fff"/><path d="M10 2A5.6 5.6 0 1 0 2 10" stroke="#a0a0a0" fill="none"/><path d="M2 10A5.6 5.6 0 0 0 10 2" stroke="#fff" fill="none"/><path d="M9.2 2.8A4.5 4.5 0 1 0 2.8 9.2" stroke="#696969" fill="none"/><path d="M2.8 9.2A4.5 4.5 0 0 0 9.2 2.8" stroke="#e3e3e3" fill="none"/><circle cx="6" cy="6" r="4" fill="#fff"/></svg>
<span class="t w" style="left:247px;top:1273px;color:#000">THD,THD+N,SINAD,SNR,NL</span>
<div class="sk" style="left:465px;top:1273px;width:13px;height:13px;background:#f0f0f0;"></div>
<span class="t" style="left:483px;top:1272px;color:#a0a0a0">Gm</span>
<span class="t" style="left:252px;top:1295px;">Range (Hz)</span>
<div class="sk" style="left:318px;top:1293px;width:78px;height:21px;background:#fff;"></div>
<span class="t" style="left:321px;top:1296px;color:#000;">20</span>
<span class="t" style="left:403px;top:1296px;">~</span>
<div class="sk" style="left:423px;top:1293px;width:78px;height:21px;background:#fff;"></div>
<span class="t" style="left:426px;top:1296px;color:#000;">20000</span>
<div class="sk" style="left:252px;top:1322px;width:13px;height:13px;background:#f0f0f0;"></div>
<span class="t" style="left:270px;top:1321px;color:#a0a0a0">Harmonic Order</span>
<div class="sk" style="left:366px;top:1319px;width:35px;height:22px;background:#f0f0f0;"></div>
<span class="t" style="left:369px;top:1321px;color:#6d6d6d;">5</span>
<span class="t" style="left:408px;top:1323px;color:#a0a0a0">f1(Hz)</span>
<div class="sk" style="left:445px;top:1319px;width:96px;height:20px;background:#f0f0f0;"></div>
<div class="rs" style="left:523px;top:1321px;width:16px;height:16px;"><svg class="ar" width="7" height="4" viewBox="0 0 7 4"><path d="M0 0h7L3.5 4z" fill="#808080"/></svg></div>
<span class="t" style="left:448px;top:1322px;color:#6d6d6d;">Peak</span>
<svg class="rd" style="left:230px;top:1352px" width="12" height="12" viewBox="0 0 12 12"><circle cx="6" cy="6" r="5.5" fill="#fff"/><path d="M10 2A5.6 5.6 0 1 0 2 10" stroke="#a0a0a0" fill="none"/><path d="M2 10A5.6 5.6 0 0 0 10 2" stroke="#fff" fill="none"/><path d="M9.2 2.8A4.5 4.5 0 1 0 2.8 9.2" stroke="#696969" fill="none"/><path d="M2.8 9.2A4.5 4.5 0 0 0 9.2 2.8" stroke="#e3e3e3" fill="none"/><circle cx="6" cy="6" r="4" fill="#fff"/></svg>
<span class="t" style="left:247px;top:1351px;color:#000">IMD</span>
<svg class="rd" style="left:283px;top:1352px" width="12" height="12" viewBox="0 0 12 12"><circle cx="6" cy="6" r="5.5" fill="#fff"/><path d="M10 2A5.6 5.6 0 1 0 2 10" stroke="#a0a0a0" fill="none"/><path d="M2 10A5.6 5.6 0 0 0 10 2" stroke="#fff" fill="none"/><path d="M9.2 2.8A4.5 4.5 0 1 0 2.8 9.2" stroke="#696969" fill="none"/><path d="M2.8 9.2A4.5 4.5 0 0 0 9.2 2.8" stroke="#e3e3e3" fill="none"/><circle cx="6" cy="6" r="4" fill="#f0f0f0"/><circle cx="6" cy="6" r="2" fill="#808080"/></svg>
<span class="t w" style="left:300px;top:1351px;color:#a0a0a0">SMPTE/DIN</span>
<svg class="rd" style="left:379px;top:1352px" width="12" height="12" viewBox="0 0 12 12"><circle cx="6" cy="6" r="5.5" fill="#fff"/><path d="M10 2A5.6 5.6 0 1 0 2 10" stroke="#a0a0a0" fill="none"/><path d="M2 10A5.6 5.6 0 0 0 10 2" stroke="#fff" fill="none"/><path d="M9.2 2.8A4.5 4.5 0 1 0 2.8 9.2" stroke="#696969" fill="none"/><path d="M2.8 9.2A4.5 4.5 0 0 0 9.2 2.8" stroke="#e3e3e3" fill="none"/><circle cx="6" cy="6" r="4" fill="#f0f0f0"/></svg>
<span class="t" style="left:396px;top:1351px;color:#a0a0a0">CCIF2</span>
<svg class="rd" style="left:442px;top:1352px" width="12" height="12" viewBox="0 0 12 12"><circle cx="6" cy="6" r="5.5" fill="#fff"/><path d="M10 2A5.6 5.6 0 1 0 2 10" stroke="#a0a0a0" fill="none"/><path d="M2 10A5.6 5.6 0 0 0 10 2" stroke="#fff" fill="none"/><path d="M9.2 2.8A4.5 4.5 0 1 0 2.8 9.2" stroke="#696969" fill="none"/><path d="M2.8 9.2A4.5 4.5 0 0 0 9.2 2.8" stroke="#e3e3e3" fill="none"/><circle cx="6" cy="6" r="4" fill="#f0f0f0"/></svg>
<span class="t" style="left:459px;top:1351px;color:#a0a0a0">CCIF3</span>
<svg class="rd" style="left:502px;top:1352px" width="12" height="12" viewBox="0 0 12 12"><circle cx="6" cy="6" r="5.5" fill="#fff"/><path d="M10 2A5.6 5.6 0 1 0 2 10" stroke="#a0a0a0" fill="none"/><path d="M2 10A5.6 5.6 0 0 0 10 2" stroke="#fff" fill="none"/><path d="M9.2 2.8A4.5 4.5 0 1 0 2.8 9.2" stroke="#696969" fill="none"/><path d="M2.8 9.2A4.5 4.5 0 0 0 9.2 2.8" stroke="#e3e3e3" fill="none"/><circle cx="6" cy="6" r="4" fill="#f0f0f0"/></svg>
<span class="t" style="left:519px;top:1351px;color:#a0a0a0">DIM</span>
<svg class="rd" style="left:230px;top:1372px" width="12" height="12" viewBox="0 0 12 12"><circle cx="6" cy="6" r="5.5" fill="#fff"/><path d="M10 2A5.6 5.6 0 1 0 2 10" stroke="#a0a0a0" fill="none"/><path d="M2 10A5.6 5.6 0 0 0 10 2" stroke="#fff" fill="none"/><path d="M9.2 2.8A4.5 4.5 0 1 0 2.8 9.2" stroke="#696969" fill="none"/><path d="M2.8 9.2A4.5 4.5 0 0 0 9.2 2.8" stroke="#e3e3e3" fill="none"/><circle cx="6" cy="6" r="4" fill="#fff"/></svg>
<span class="t" style="left:247px;top:1371px;color:#000">Bandwidth (-3dB)</span>
<svg class="rd" style="left:365px;top:1372px" width="12" height="12" viewBox="0 0 12 12"><circle cx="6" cy="6" r="5.5" fill="#fff"/><path d="M10 2A5.6 5.6 0 1 0 2 10" stroke="#a0a0a0" fill="none"/><path d="M2 10A5.6 5.6 0 0 0 10 2" stroke="#fff" fill="none"/><path d="M9.2 2.8A4.5 4.5 0 1 0 2.8 9.2" stroke="#696969" fill="none"/><path d="M2.8 9.2A4.5 4.5 0 0 0 9.2 2.8" stroke="#e3e3e3" fill="none"/><circle cx="6" cy="6" r="4" fill="#fff"/></svg>
<span class="t" style="left:381px;top:1371px;color:#000">Crosstalk</span>
<svg class="rd" style="left:450px;top:1372px" width="12" height="12" viewBox="0 0 12 12"><circle cx="6" cy="6" r="5.5" fill="#fff"/><path d="M10 2A5.6 5.6 0 1 0 2 10" stroke="#a0a0a0" fill="none"/><path d="M2 10A5.6 5.6 0 0 0 10 2" stroke="#fff" fill="none"/><path d="M9.2 2.8A4.5 4.5 0 1 0 2.8 9.2" stroke="#696969" fill="none"/><path d="M2.8 9.2A4.5 4.5 0 0 0 9.2 2.8" stroke="#e3e3e3" fill="none"/><circle cx="6" cy="6" r="4" fill="#fff"/></svg>
<span class="t" style="left:466px;top:1371px;color:#000">Harmonics</span>
<svg class="rd" style="left:230px;top:1393px" width="12" height="12" viewBox="0 0 12 12"><circle cx="6" cy="6" r="5.5" fill="#fff"/><path d="M10 2A5.6 5.6 0 1 0 2 10" stroke="#a0a0a0" fill="none"/><path d="M2 10A5.6 5.6 0 0 0 10 2" stroke="#fff" fill="none"/><path d="M9.2 2.8A4.5 4.5 0 1 0 2.8 9.2" stroke="#696969" fill="none"/><path d="M2.8 9.2A4.5 4.5 0 0 0 9.2 2.8" stroke="#e3e3e3" fill="none"/><circle cx="6" cy="6" r="4" fill="#fff"/></svg>
<span class="t" style="left:247px;top:1392px;color:#000">Energy in user defined frequency bands</span>
<svg class="rd" style="left:230px;top:1414px" width="12" height="12" viewBox="0 0 12 12"><circle cx="6" cy="6" r="5.5" fill="#fff"/><path d="M10 2A5.6 5.6 0 1 0 2 10" stroke="#a0a0a0" fill="none"/><path d="M2 10A5.6 5.6 0 0 0 10 2" stroke="#fff" fill="none"/><path d="M9.2 2.8A4.5 4.5 0 1 0 2.8 9.2" stroke="#696969" fill="none"/><path d="M2.8 9.2A4.5 4.5 0 0 0 9.2 2.8" stroke="#e3e3e3" fill="none"/><circle cx="6" cy="6" r="4" fill="#fff"/></svg>
<span class="t" style="left:247px;top:1413px;color:#000">Peaks</span>
<span class="t" style="left:312px;top:1411px;color:#a0a0a0">Deadband (Hz)</span>
<div class="sk" style="left:427px;top:1409px;width:59px;height:22px;background:#f0f0f0;"></div>
<span class="t" style="left:430px;top:1411px;color:#6d6d6d;">100</span>
<div class="sk" style="left:247px;top:1438px;width:13px;height:13px;background:#f0f0f0;"></div>
<span class="t" style="left:265px;top:1437px;color:#a0a0a0">TD+N</span>
<span class="t" style="left:312px;top:1438px;color:#a0a0a0">Number of Peaks</span>
<div class="sk" style="left:427px;top:1433px;width:59px;height:22px;background:#f0f0f0;"></div>
<span class="t" style="left:430px;top:1435px;color:#6d6d6d;">2</span>
<span class="t" style="left:312px;top:1464px;color:#a0a0a0">Sort by</span>
<svg class="rd" style="left:431px;top:1467px" width="12" height="12" viewBox="0 0 12 12"><circle cx="6" cy="6" r="5.5" fill="#fff"/><path d="M10 2A5.6 5.6 0 1 0 2 10" stroke="#a0a0a0" fill="none"/><path d="M2 10A5.6 5.6 0 0 0 10 2" stroke="#fff" fill="none"/><path d="M9.2 2.8A4.5 4.5 0 1 0 2.8 9.2" stroke="#696969" fill="none"/><path d="M2.8 9.2A4.5 4.5 0 0 0 9.2 2.8" stroke="#e3e3e3" fill="none"/><circle cx="6" cy="6" r="4" fill="#f0f0f0"/><circle cx="6" cy="6" r="2" fill="#808080"/></svg>
<span class="t" style="left:448px;top:1466px;color:#a0a0a0">Magnitude</span>
<svg class="rd" style="left:526px;top:1467px" width="12" height="12" viewBox="0 0 12 12"><circle cx="6" cy="6" r="5.5" fill="#fff"/><path d="M10 2A5.6 5.6 0 1 0 2 10" stroke="#a0a0a0" fill="none"/><path d="M2 10A5.6 5.6 0 0 0 10 2" stroke="#fff" fill="none"/><path d="M9.2 2.8A4.5 4.5 0 1 0 2.8 9.2" stroke="#696969" fill="none"/><path d="M2.8 9.2A4.5 4.5 0 0 0 9.2 2.8" stroke="#e3e3e3" fill="none"/><circle cx="6" cy="6" r="4" fill="#f0f0f0"/></svg>
<span class="t" style="left:543px;top:1466px;color:#a0a0a0">Frequency</span>
<div class="rs" style="left:516px;top:1398px;width:23px;height:21px;"><span class="t" style="position:absolute;left:0;right:0;text-align:center;top:3px;color:#a0a0a0;">-&gt;</span></div>
<div class="rs" style="left:516px;top:1421px;width:23px;height:22px;"><span class="t" style="position:absolute;left:0;right:0;text-align:center;top:3px;color:#a0a0a0;">&lt;-</span></div>
<span class="t" style="left:547px;top:1252px;color:#a0a0a0">Start (Hz)</span>
<span class="t" style="left:627px;top:1252px;color:#a0a0a0">End (Hz)</span>
<div class="sk" style="left:546px;top:1270px;width:69px;height:22px;background:#f0f0f0;"></div>
<span class="t" style="left:549px;top:1272px;color:#6d6d6d;">0</span>
<span class="t" style="left:619px;top:1276px;color:#a0a0a0">~</span>
<div class="sk" style="left:631px;top:1270px;width:69px;height:22px;background:#f0f0f0;"></div>
<span class="t" style="left:634px;top:1272px;color:#6d6d6d;">0</span>
<div class="sk" style="left:546px;top:1298px;width:152px;height:150px;background:#fff;"></div>
<div class="rs" style="left:648px;top:1452px;width:23px;height:23px;"><svg style="position:absolute;left:3px;top:4px;opacity:0.5" width="16" height="15" viewBox="0 0 16 15"><path d="M0.500 13.500V4.500h2l1-1h3l1 1h4v3" fill="#ffff99" stroke="#000"/><path d="M0.500 13.500l3-6h12l-3 6z" fill="#808000" stroke="#000"/><path d="M9.500 2.500c2-2 4-2 5 0.500m0.500-2v2.500h-2.500" fill="none" stroke="#000"/></svg></div>
<div class="rs" style="left:672px;top:1452px;width:23px;height:23px;"><svg style="position:absolute;left:4px;top:4px;opacity:0.5" width="14" height="14" viewBox="0 0 14 14" shape-rendering="crispEdges"><rect x="0.500" y="0.500" width="13" height="13" fill="#808000" stroke="#000"/><rect x="3" y="1" width="8" height="6" fill="#f0f0f0"/><rect x="3" y="9" width="8" height="4" fill="#000"/><rect x="9" y="10" width="1" height="3" fill="#f0f0f0"/><rect x="12" y="1" width="1" height="1" fill="#f0f0f0"/></svg></div>
<div class="sk" style="left:715px;top:1252px;width:13px;height:13px;background:#f0f0f0;"></div>
<span class="t" style="left:733px;top:1251px;color:#a0a0a0">Non-Coherence</span>
<div class="sk" style="left:715px;top:1273px;width:13px;height:13px;background:#fff;"></div>
<span class="t" style="left:733px;top:1272px;color:#000">Sound Intensity</span>
<span class="t" style="left:733px;top:1295px;color:#a0a0a0">Mic Spacing (mm)</span>
<div class="sk" style="left:831px;top:1290px;width:29px;height:22px;background:#f0f0f0;"></div>
<span class="t" style="left:834px;top:1292px;color:#6d6d6d;">8.5</span>
<div class="" style="left:327px;top:1047px;width:324px;height:5px;background:#ed1c24;border-radius:3px"></div>
<div class="" style="left:0px;top:67px;width:1600px;height:1px;background:#a0a0a0"></div>
<div class="" style="left:0px;top:68px;width:1600px;height:1px;background:#f8f8f8"></div>
<div class="" style="left:0px;top:91px;width:1600px;height:1px;background:#a0a0a0"></div>
<div class="" style="left:0px;top:92px;width:1600px;height:1px;background:#fff"></div>
<div class="" style="left:0px;top:858px;width:1600px;height:1px;background:#a0a0a0"></div>
<div class="" style="left:0px;top:859px;width:1600px;height:3px;background:#fff"></div>
<svg class="abs" style="left:320px;top:815px" width="40" height="95" viewBox="320 815 40 95"><path d="M336.200 822.500L341.500 834 348 851.500 345.500 852.500 340.500 850 337.800 848.500 337 853 334.200 853 334 838z" fill="#ed1c24" stroke="#ed1c24" stroke-width="2.500" stroke-linejoin="round"/><path d="M339 846L349.500 900" stroke="#ed1c24" stroke-width="5" stroke-linecap="round" fill="none"/></svg>
</body></html>
